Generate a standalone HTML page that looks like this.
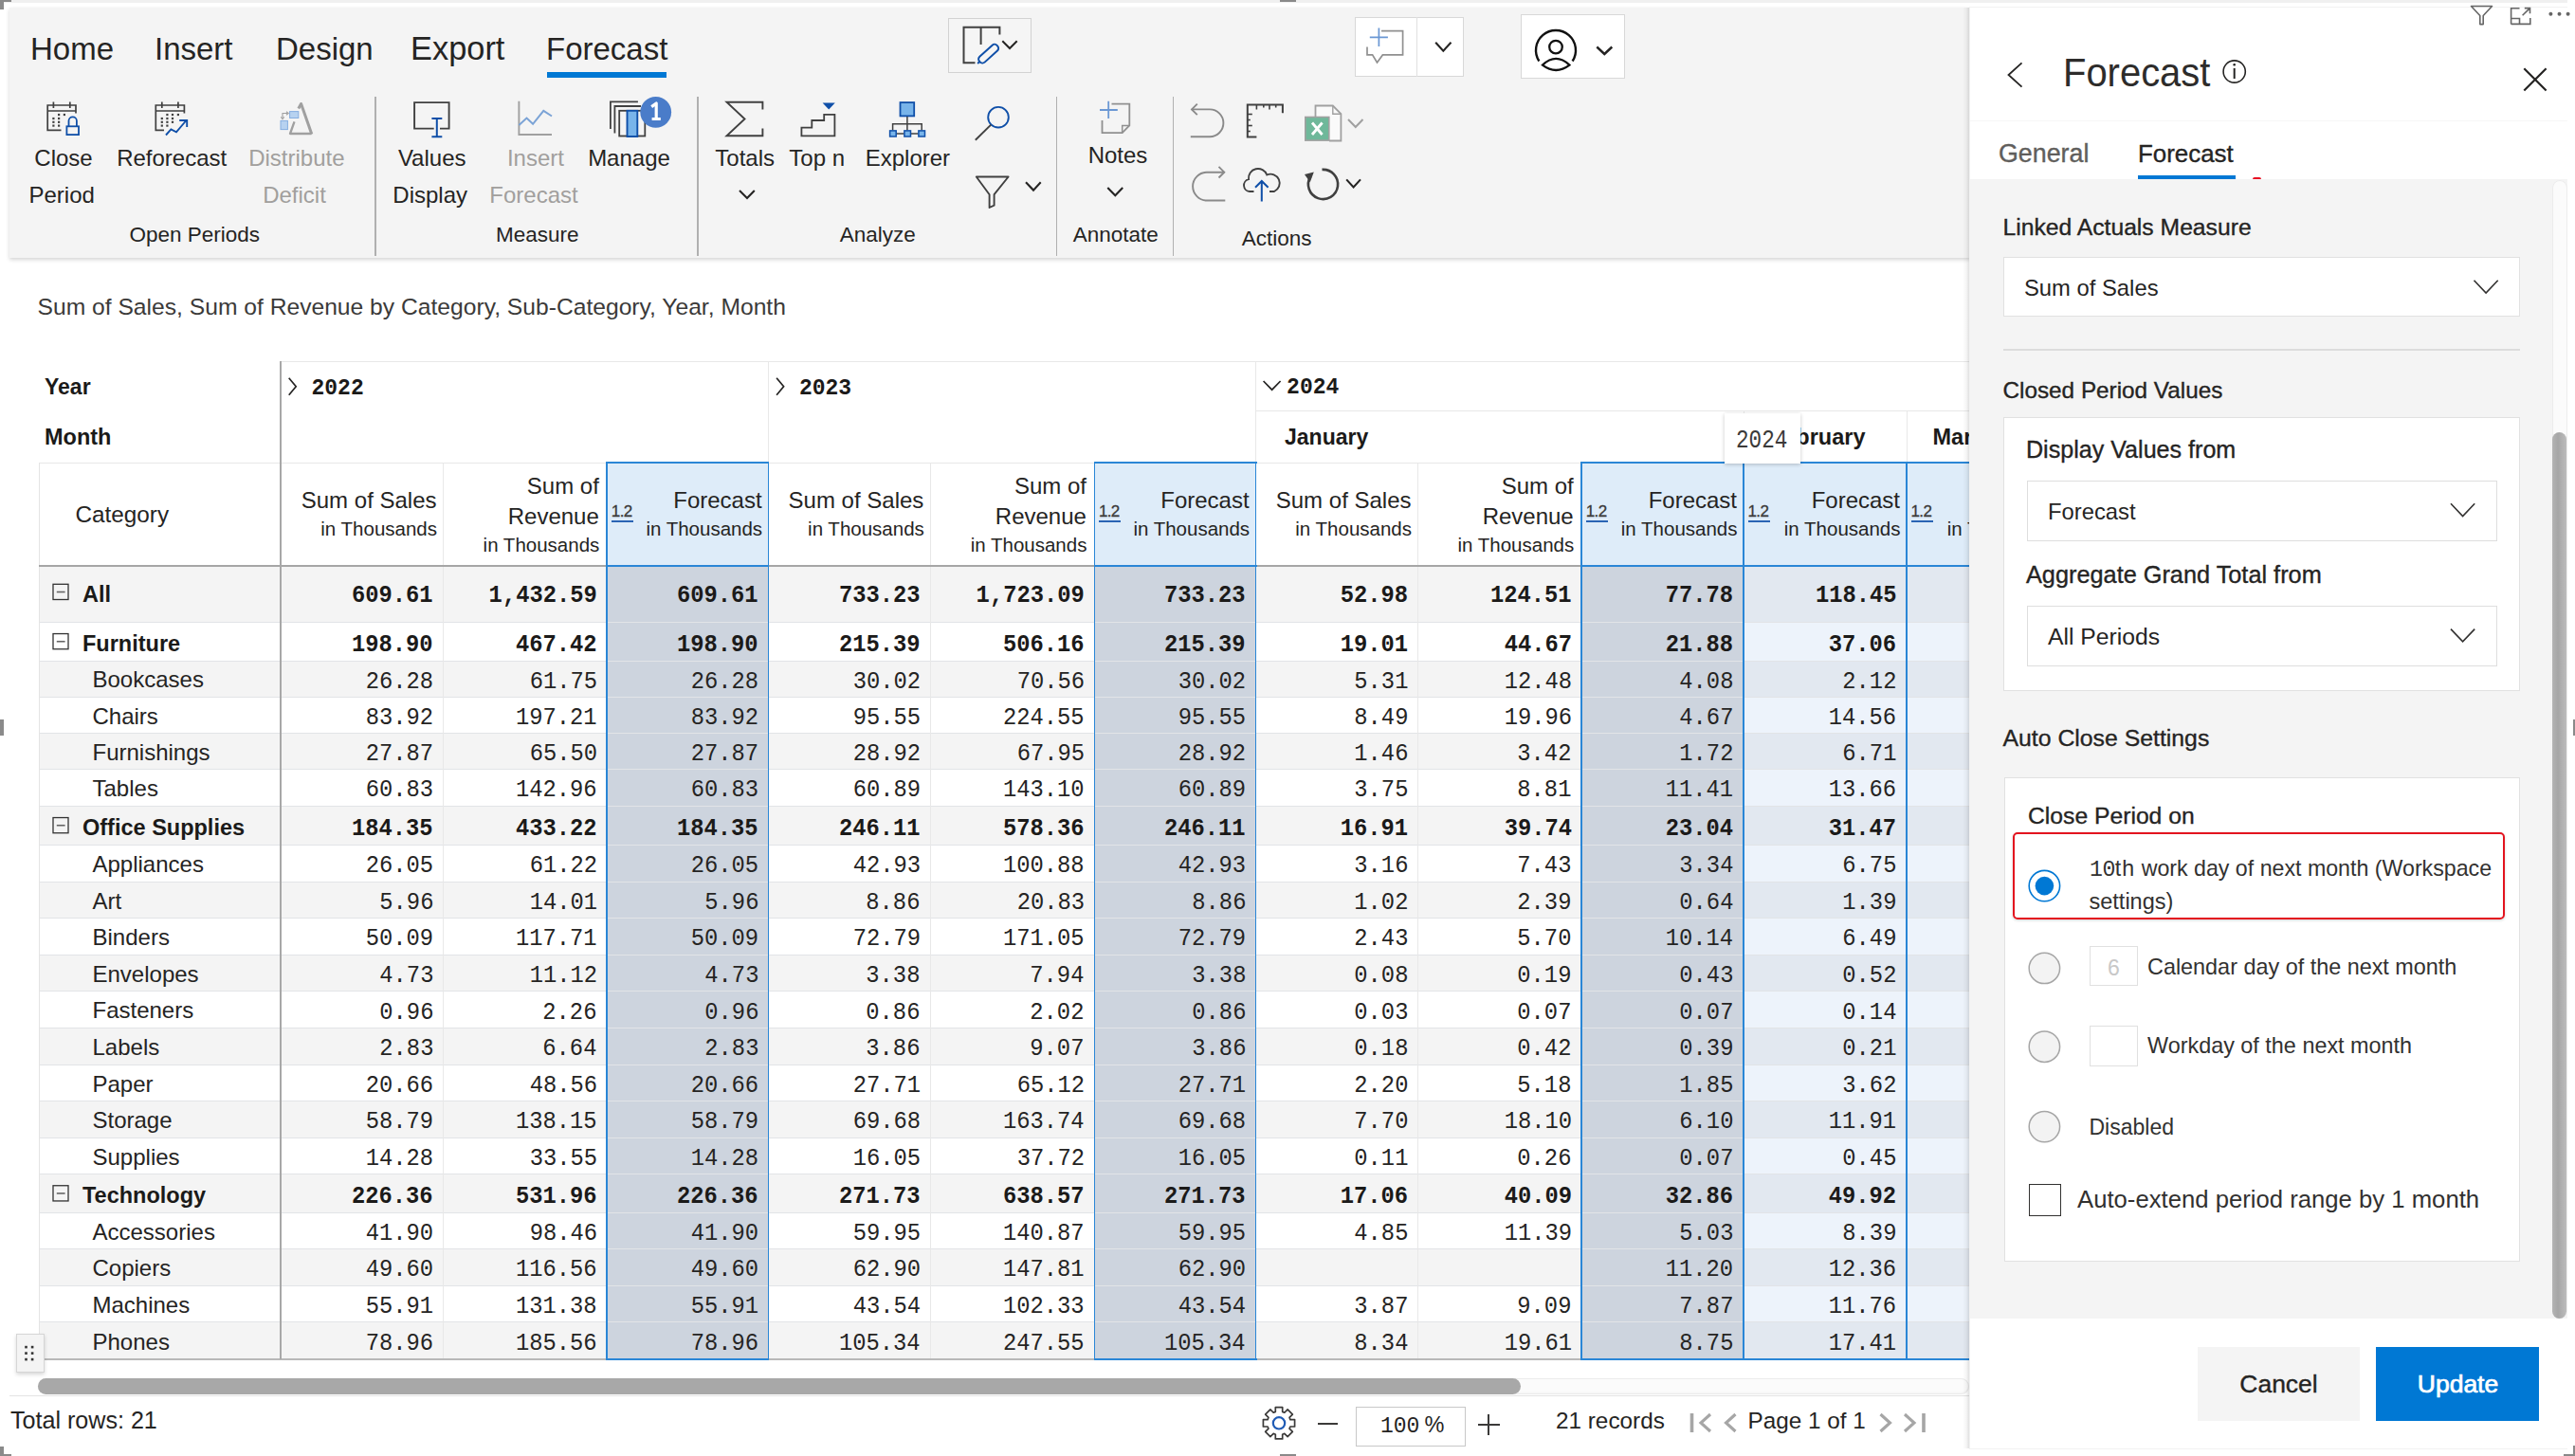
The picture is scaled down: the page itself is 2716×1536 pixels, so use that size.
<!DOCTYPE html>
<html><head><meta charset="utf-8"><title>Forecast</title>
<style>
html,body{margin:0;padding:0;}
body{width:2716px;height:1536px;position:relative;overflow:hidden;background:#fff;font-family:"Liberation Sans", sans-serif;color:#252423;}
.t{position:absolute;white-space:nowrap;}
.r{position:absolute;}
svg.r{overflow:visible;}
</style></head><body>
<div class="r" style="left:0.00px;top:0.00px;width:2716.00px;height:3.00px;background:#f0f0f0;"></div>
<div class="r" style="left:10.00px;top:7.50px;width:2068.00px;height:264.50px;background:#f4f4f4;box-shadow:0 2px 4px rgba(0,0,0,0.17);"></div>
<div class="r" style="left:0.00px;top:0.00px;width:12.00px;height:1.50px;background:#8a8a8a;"></div>
<div class="r" style="left:0.00px;top:0.00px;width:3.50px;height:10.00px;background:#8a8a8a;"></div>
<div class="t" style="top:35.06px;font-size:33px;line-height:33px;font-weight:400;color:#252423;left:32.00px;">Home</div>
<div class="t" style="top:35.06px;font-size:33px;line-height:33px;font-weight:400;color:#252423;left:163.00px;">Insert</div>
<div class="t" style="top:35.06px;font-size:33px;line-height:33px;font-weight:400;color:#252423;left:291.00px;">Design</div>
<div class="t" style="top:33.87px;font-size:34.4px;line-height:34.4px;font-weight:400;color:#252423;left:433.00px;">Export</div>
<div class="t" style="top:35.06px;font-size:33px;line-height:33px;font-weight:400;color:#252423;left:576.00px;">Forecast</div>
<div class="r" style="left:577.00px;top:76.00px;width:126.00px;height:6.00px;background:#0078d4;"></div>
<div class="t" style="top:155.08px;font-size:24px;line-height:24px;font-weight:400;color:#252423;left:-533.00px;width:1200px;text-align:center;">Close</div>
<div class="t" style="top:194.08px;font-size:24px;line-height:24px;font-weight:400;color:#252423;left:-534.80px;width:1200px;text-align:center;">Period</div>
<div class="t" style="top:155.08px;font-size:24px;line-height:24px;font-weight:400;color:#252423;left:-418.80px;width:1200px;text-align:center;">Reforecast</div>
<div class="t" style="top:155.08px;font-size:24px;line-height:24px;font-weight:400;color:#a19f9d;left:-287.20px;width:1200px;text-align:center;">Distribute</div>
<div class="t" style="top:194.08px;font-size:24px;line-height:24px;font-weight:400;color:#a19f9d;left:-289.50px;width:1200px;text-align:center;">Deficit</div>
<div class="t" style="top:236.75px;font-size:22.5px;line-height:22.5px;font-weight:400;color:#252423;left:-394.80px;width:1200px;text-align:center;">Open Periods</div>
<div class="t" style="top:155.08px;font-size:24px;line-height:24px;font-weight:400;color:#252423;left:-144.30px;width:1200px;text-align:center;">Values</div>
<div class="t" style="top:194.08px;font-size:24px;line-height:24px;font-weight:400;color:#252423;left:-146.30px;width:1200px;text-align:center;">Display</div>
<div class="t" style="top:155.08px;font-size:24px;line-height:24px;font-weight:400;color:#a19f9d;left:-35.10px;width:1200px;text-align:center;">Insert</div>
<div class="t" style="top:194.08px;font-size:24px;line-height:24px;font-weight:400;color:#a19f9d;left:-37.00px;width:1200px;text-align:center;">Forecast</div>
<div class="t" style="top:155.08px;font-size:24px;line-height:24px;font-weight:400;color:#252423;left:63.50px;width:1200px;text-align:center;">Manage</div>
<div class="t" style="top:236.75px;font-size:22.5px;line-height:22.5px;font-weight:400;color:#252423;left:-33.20px;width:1200px;text-align:center;">Measure</div>
<div class="t" style="top:155.08px;font-size:24px;line-height:24px;font-weight:400;color:#252423;left:185.70px;width:1200px;text-align:center;">Totals</div>
<div class="t" style="top:155.08px;font-size:24px;line-height:24px;font-weight:400;color:#252423;left:261.70px;width:1200px;text-align:center;">Top n</div>
<div class="t" style="top:155.08px;font-size:24px;line-height:24px;font-weight:400;color:#252423;left:357.40px;width:1200px;text-align:center;">Explorer</div>
<div class="t" style="top:236.75px;font-size:22.5px;line-height:22.5px;font-weight:400;color:#252423;left:325.70px;width:1200px;text-align:center;">Analyze</div>
<div class="t" style="top:152.38px;font-size:24px;line-height:24px;font-weight:400;color:#252423;left:579.00px;width:1200px;text-align:center;">Notes</div>
<div class="t" style="top:236.75px;font-size:22.5px;line-height:22.5px;font-weight:400;color:#252423;left:576.70px;width:1200px;text-align:center;">Annotate</div>
<div class="t" style="top:240.55px;font-size:22.5px;line-height:22.5px;font-weight:400;color:#252423;left:746.60px;width:1200px;text-align:center;">Actions</div>
<div class="r" style="left:395.25px;top:102.00px;width:1.50px;height:168.00px;background:#b0b0b0;"></div>
<div class="r" style="left:735.25px;top:102.00px;width:1.50px;height:168.00px;background:#b0b0b0;"></div>
<div class="r" style="left:1113.75px;top:102.00px;width:1.50px;height:168.00px;background:#b0b0b0;"></div>
<div class="r" style="left:1236.75px;top:102.00px;width:1.50px;height:168.00px;background:#b0b0b0;"></div>
<svg class="r" style="left:40px;top:100px" width="60" height="50" viewBox="40 100 60 50"><path d="M64.5 137.4 H50.2 V111 H80 V119.4 M50.2 117 H80" fill="none" stroke-linecap="butt" stroke-linejoin="miter" stroke="#404040" stroke-width="1.7"/><path d="M56.4 107.5 V114 M73.8 107.5 V114" stroke="#404040" stroke-width="1.7"/><rect x="61.0" y="119.9" width="2.2" height="2.2" fill="#404040"/><rect x="66.80000000000001" y="119.9" width="2.2" height="2.2" fill="#404040"/><rect x="55.3" y="123.9" width="2.2" height="2.2" fill="#404040"/><rect x="61.0" y="123.9" width="2.2" height="2.2" fill="#404040"/><rect x="55.3" y="127.70000000000002" width="2.2" height="2.2" fill="#404040"/><rect x="61.0" y="127.70000000000002" width="2.2" height="2.2" fill="#404040"/><rect x="55.3" y="131.5" width="2.2" height="2.2" fill="#404040"/><rect x="61.0" y="131.5" width="2.2" height="2.2" fill="#404040"/><rect x="70.4" y="133.3" width="12.6" height="8.8" fill="none" stroke="#0f4fa8" stroke-width="1.8"/><path d="M72.5 133 V127.5 A4.2 4.2 0 0 1 80.9 127.5 V133" fill="none" stroke="#0f4fa8" stroke-width="1.8"/></svg>
<svg class="r" style="left:155px;top:100px" width="50" height="50" viewBox="155 100 50 50"><path d="M173 137.4 H164.3 V111 H194.4 V119.4 M164.3 117 H194.4" fill="none" stroke-linecap="butt" stroke-linejoin="miter" stroke="#404040" stroke-width="1.7"/><path d="M170.8 107.5 V114 M187.9 107.5 V114" stroke="#404040" stroke-width="1.7"/><rect x="175.3" y="119.9" width="2.2" height="2.2" fill="#404040"/><rect x="180.9" y="119.9" width="2.2" height="2.2" fill="#404040"/><rect x="186.8" y="119.9" width="2.2" height="2.2" fill="#404040"/><rect x="169.70000000000002" y="123.9" width="2.2" height="2.2" fill="#404040"/><rect x="175.3" y="123.9" width="2.2" height="2.2" fill="#404040"/><rect x="180.9" y="123.9" width="2.2" height="2.2" fill="#404040"/><rect x="169.70000000000002" y="127.70000000000002" width="2.2" height="2.2" fill="#404040"/><rect x="175.3" y="127.70000000000002" width="2.2" height="2.2" fill="#404040"/><rect x="180.9" y="127.70000000000002" width="2.2" height="2.2" fill="#404040"/><rect x="169.70000000000002" y="131.5" width="2.2" height="2.2" fill="#404040"/><rect x="175.3" y="131.5" width="2.2" height="2.2" fill="#404040"/><path d="M175 142.5 L180.4 136.4 L186 139.4 L196.9 126.5 M189.2 127 H197.2 V134" fill="none" stroke="#0f4fa8" stroke-width="1.9"/></svg>
<svg class="r" style="left:290px;top:100px" width="50" height="50" viewBox="290 100 50 50"><path d="M310.5 128.4 L306 141 H328.5" fill="none" stroke="#a0a0a0" stroke-width="2.3" stroke-linejoin="round"/><path d="M328.8 141.6 L317.6 109.5 L314.8 114.5" fill="none" stroke="#a0a0a0" stroke-width="3" stroke-linejoin="round"/><rect x="305.6" y="117.6" width="9.2" height="6.9" fill="#b7d2f0" stroke="#86aee0" stroke-width="1"/><rect x="296" y="127.4" width="7.4" height="9.2" fill="#b7d2f0" stroke="#86aee0" stroke-width="1"/><path d="M298 124.5 V119.5 H303" fill="none" stroke="#a0a0a0" stroke-width="1.1"/><path d="M296.3 123.3 L298 125.6 L299.7 123.3 M302 117.8 L304.2 119.5 L302 121.2" fill="none" stroke="#a0a0a0" stroke-width="1.1"/></svg>
<svg class="r" style="left:430px;top:100px" width="50" height="50" viewBox="430 100 50 50"><path d="M457.7 135.6 H437.1 V108.1 H473.6 V135.6 H464" fill="none" stroke="#404040" stroke-width="1.9"/><path d="M460.8 125 V144.3 M455.4 125 H466.3 M455.4 144.3 H466.3" fill="none" stroke="#0f4fa8" stroke-width="2"/></svg>
<svg class="r" style="left:540px;top:100px" width="50" height="50" viewBox="540 100 50 50"><path d="M547.4 106.7 V142 H582" fill="none" stroke="#a0a0a0" stroke-width="1.9"/><path d="M547.4 131.9 L555.5 124.6 L562.1 130.8 L573.3 116.9 L582 122.5" fill="none" stroke="#7ba3d6" stroke-width="2"/></svg>
<svg class="r" style="left:638px;top:98px" width="74" height="52" viewBox="638 98 74 52"><path d="M643.9 136.1 V107.4 H672.9 M648.4 140.6 V112 H676" fill="none" stroke="#404040" stroke-width="1.8"/><rect x="653.2" y="116.8" width="27.1" height="26.7" fill="none" stroke="#404040" stroke-width="1.8"/><rect x="661.5" y="116.8" width="10.8" height="27.2" fill="#78b4ea" stroke="#0f4fa8" stroke-width="1.9"/><circle cx="691.7" cy="118.3" r="16.4" fill="#4a7cc9"/><path d="M687.2 112.6 L692.2 109 V125.5 M687.6 125.5 H696.8" fill="none" stroke="#fff" stroke-width="3.2" stroke-linejoin="round"/></svg>
<svg class="r" style="left:760px;top:100px" width="50" height="50" viewBox="760 100 50 50"><path d="M804.4 115.4 V107.7 H766.5 L785.5 125.5 L766.5 143.3 H804.4 V135.6" fill="none" stroke="#404040" stroke-width="1.9"/></svg>
<svg class="r" style="left:775px;top:195px" width="25" height="20" viewBox="775 195 25 20"><path d="M780 201 L788 209 L795.8 201" fill="none" stroke="#252423" stroke-width="2.1"/></svg>
<svg class="r" style="left:840px;top:100px" width="50" height="50" viewBox="840 100 50 50"><path d="M845.4 143.3 H880.4 V120.8 H869.2 V127 H856.3 V134.6 H845.4 Z" fill="none" stroke="#404040" stroke-width="1.8"/><path d="M867.6 108.5 H880.8 L874.2 115.6 Z" fill="#0f4fa8"/></svg>
<svg class="r" style="left:930px;top:100px" width="55" height="50" viewBox="930 100 55 50"><rect x="949.5" y="108.1" width="14.7" height="14.3" fill="#78b4ea" stroke="#0f4fa8" stroke-width="1.8"/><path d="M956.9 123 V130.8 M941.6 137.5 V130.8 H972.2 V137.5 M956.9 130.8 V137.5 M945.4 141 H953.5 M960.8 141 H968.5" fill="none" stroke="#404040" stroke-width="1.5"/><rect x="938.6" y="137.9" width="6.6" height="6.1" fill="#78b4ea" stroke="#0f4fa8" stroke-width="1.5"/><rect x="953.9" y="137.9" width="6.6" height="6.1" fill="#78b4ea" stroke="#0f4fa8" stroke-width="1.5"/><rect x="968.9" y="137.9" width="6.6" height="6.1" fill="#78b4ea" stroke="#0f4fa8" stroke-width="1.5"/></svg>
<svg class="r" style="left:1020px;top:105px" width="50" height="50" viewBox="1020 105 50 50"><circle cx="1053" cy="123.7" r="10.8" fill="none" stroke="#0f4fa8" stroke-width="1.9"/><path d="M1028.8 147.7 L1045.2 131.6" stroke="#404040" stroke-width="1.9"/></svg>
<svg class="r" style="left:1020px;top:180px" width="85" height="45" viewBox="1020 180 85 45"><path d="M1029.8 186.5 H1063.6 L1048.6 205.2 V216.7 L1043.6 219 V205.2 Z" fill="none" stroke="#404040" stroke-width="1.9" stroke-linejoin="round"/><path d="M1082 192.3 L1090 200.6 L1097.7 192.3" fill="none" stroke="#252423" stroke-width="2.1"/></svg>
<svg class="r" style="left:1155px;top:100px" width="45" height="50" viewBox="1155 100 45 50"><path d="M1160 116 H1178.8 M1169.2 106.7 V125" stroke="#6b98d4" stroke-width="1.8"/><path d="M1172.5 109.6 H1191.3 V132.5 L1183.7 140.2 H1162.5 V127" fill="none" stroke="#909090" stroke-width="1.8"/><path d="M1191.3 132.5 H1183.7 V140.2" fill="none" stroke="#909090" stroke-width="1.5"/></svg>
<svg class="r" style="left:1160px;top:190px" width="35" height="25" viewBox="1160 190 35 25"><path d="M1168.3 198 L1176.3 206.2 L1184.2 198" fill="none" stroke="#252423" stroke-width="2.1"/></svg>
<svg class="r" style="left:1250px;top:105px" width="50" height="45" viewBox="1250 105 50 45"><path d="M1256.7 115.4 H1276 A14.4 14.4 0 0 1 1276 144.2 H1255.8" fill="none" stroke="#8a8a8a" stroke-width="1.9"/><path d="M1262.8 109.6 L1257 115.4 L1262.8 121.2" fill="none" stroke="#8a8a8a" stroke-width="1.9"/></svg>
<svg class="r" style="left:1250px;top:172px" width="50" height="44" viewBox="1250 172 50 44"><path d="M1291.3 181.7 H1273 A14.9 14.9 0 0 0 1273 211.5 H1292.3" fill="none" stroke="#8a8a8a" stroke-width="1.9"/><path d="M1285.5 175.9 L1291.3 181.7 L1285.5 187.5" fill="none" stroke="#8a8a8a" stroke-width="1.9"/></svg>
<svg class="r" style="left:1310px;top:104px" width="50" height="46" viewBox="1310 104 50 46"><path d="M1352.9 119.2 V110.5 H1315.8 V144.6 H1325.4" fill="none" stroke="#404040" stroke-width="2"/><path d="M1325.4 110.5 V115.5" stroke="#404040" stroke-width="1.6"/><path d="M1332.8 110.5 V113.5" stroke="#404040" stroke-width="1.6"/><path d="M1339 110.5 V115.5" stroke="#404040" stroke-width="1.6"/><path d="M1345.7 110.5 V113.5" stroke="#404040" stroke-width="1.6"/><path d="M1315.8 120.5 H1320.8" stroke="#404040" stroke-width="1.6"/><path d="M1315.8 126.5 H1318.8" stroke="#404040" stroke-width="1.6"/><path d="M1315.8 132.5 H1320.8" stroke="#404040" stroke-width="1.6"/><path d="M1315.8 138.5 H1318.8" stroke="#404040" stroke-width="1.6"/></svg>
<svg class="r" style="left:1370px;top:104px" width="75" height="48" viewBox="1370 104 75 48"><path d="M1387.5 123 V111.5 H1405.8 L1414.4 120.2 V148.5 H1402" fill="#fafafa" stroke="#a0a0a0" stroke-width="1.8"/><path d="M1405.8 111.5 V120.2 H1414.4" fill="none" stroke="#a0a0a0" stroke-width="1.4"/><rect x="1376.8" y="123.5" width="25" height="24.6" fill="#6fb89a" stroke="#a0a0a0" stroke-width="1.6"/><path d="M1384 129.5 L1394.6 142 M1394.6 129.5 L1384 142" stroke="#fff" stroke-width="2.8"/><path d="M1422 126 L1429.8 134 L1437.5 126" fill="none" stroke="#a0a0a0" stroke-width="2"/></svg>
<svg class="r" style="left:1305px;top:172px" width="55" height="46" viewBox="1305 172 55 46"><path d="M1322.5 202 H1318 A6.5 6.5 0 0 1 1317 189.2 A10 10 0 0 1 1336.3 184.5 A8.5 8.5 0 0 1 1344 202 H1339" fill="none" stroke="#404040" stroke-width="1.9"/><path d="M1330.8 212.5 V191.8 M1324 197.8 L1330.8 191 L1337.6 197.8" fill="none" stroke="#0f4fa8" stroke-width="2"/></svg>
<svg class="r" style="left:1370px;top:172px" width="75" height="44" viewBox="1370 172 75 44"><path d="M1382.3 186.2 A15.6 15.6 0 1 0 1394.5 178.9" fill="none" stroke="#404040" stroke-width="2.6"/><path d="M1376 184 L1385.8 181.6 L1381.8 192.2 Z" fill="#404040"/><path d="M1420.2 189.4 L1427.6 197.4 L1435 189.4" fill="none" stroke="#252423" stroke-width="2.1"/></svg>
<div class="r" style="left:1000.00px;top:19.20px;width:88.00px;height:57.80px;background:#f5f5f5;border:1px solid #d2d2d2;box-sizing:border-box;"></div>
<svg class="r" style="left:1005px;top:22px" width="80" height="53" viewBox="1005 22 80 53"><path d="M1028.5 66.3 H1016.5 V28.8 H1054.4 V36.5 M1034.6 28.8 V47" fill="none" stroke="#404040" stroke-width="2"/><g transform="rotate(-42 1043 56.3)"><rect x="1030" y="52.3" width="25" height="8" rx="3.5" fill="none" stroke="#0f4fa8" stroke-width="2"/><path d="M1030 56.3 l-3 0" stroke="#0f4fa8" stroke-width="2"/></g><path d="M1057.3 43.3 L1065 51 L1072.7 43.3" fill="none" stroke="#252423" stroke-width="2"/></svg>
<div class="r" style="left:1428.50px;top:18.00px;width:115.50px;height:62.50px;background:#ffffff;border:1px solid #d8d8d8;box-sizing:border-box;"></div>
<div class="r" style="left:1494.10px;top:18.00px;width:1.00px;height:62.50px;background:#e0e0e0;"></div>
<svg class="r" style="left:1435px;top:24px" width="105" height="48" viewBox="1435 24 105 48"><path d="M1444.8 39.4 H1463.9 M1454.4 29.4 V49" stroke="#6b98d4" stroke-width="1.7"/><path d="M1457 32.6 H1479.6 V57.9 H1458.4 L1452.5 66 L1447.6 57.9 H1442 V49.5" fill="none" stroke="#909090" stroke-width="1.7"/><path d="M1514.2 44.8 L1522.3 53.6 L1530.5 44.8" fill="none" stroke="#252423" stroke-width="2.1"/></svg>
<div class="r" style="left:1604.00px;top:15.00px;width:109.50px;height:67.50px;background:#ffffff;border:1.2px solid #d8d8d8;box-sizing:border-box;"></div>
<svg class="r" style="left:1612px;top:24px" width="96" height="54" viewBox="1612 24 96 54"><path d="M1623.4 64.5 A21 21 0 1 1 1658.6 64.5" fill="none" stroke="#111" stroke-width="2.4"/><circle cx="1641" cy="49.6" r="6.8" fill="none" stroke="#111" stroke-width="2.3"/><path d="M1627 68.6 Q1641.2 55.2 1655.4 68.6 Q1641.2 79.4 1627 68.6 Z" fill="none" stroke="#111" stroke-width="2.3"/><path d="M1684.3 49.5 L1692.3 57 L1700.3 49.5" fill="none" stroke="#252423" stroke-width="2.4"/></svg>
<div class="t" style="top:312.13px;font-size:24.65px;line-height:24.65px;font-weight:400;color:#3b3a39;left:39.50px;">Sum of Sales, Sum of Revenue by Category, Sub-Category, Year, Month</div>
<div class="r" style="left:41.00px;top:596.50px;width:2037.00px;height:60.00px;background:#f4f4f4;"></div>
<div class="r" style="left:640.30px;top:596.50px;width:170.30px;height:60.00px;background:#cdd4de;"></div>
<div class="r" style="left:1154.40px;top:596.50px;width:170.20px;height:60.00px;background:#cdd4de;"></div>
<div class="r" style="left:1668.20px;top:596.50px;width:170.80px;height:60.00px;background:#cdd4de;"></div>
<div class="r" style="left:1839.00px;top:596.50px;width:172.00px;height:60.00px;background:#e2e8f0;"></div>
<div class="r" style="left:2011.00px;top:596.50px;width:67.00px;height:60.00px;background:#e2e8f0;"></div>
<div class="r" style="left:640.30px;top:656.50px;width:170.30px;height:40.50px;background:#cdd4de;"></div>
<div class="r" style="left:1154.40px;top:656.50px;width:170.20px;height:40.50px;background:#cdd4de;"></div>
<div class="r" style="left:1668.20px;top:656.50px;width:170.80px;height:40.50px;background:#cdd4de;"></div>
<div class="r" style="left:1839.00px;top:656.50px;width:172.00px;height:40.50px;background:#edf3fb;"></div>
<div class="r" style="left:2011.00px;top:656.50px;width:67.00px;height:40.50px;background:#edf3fb;"></div>
<div class="r" style="left:41.00px;top:697.00px;width:2037.00px;height:38.25px;background:#f4f4f4;"></div>
<div class="r" style="left:640.30px;top:697.00px;width:170.30px;height:38.25px;background:#cdd4de;"></div>
<div class="r" style="left:1154.40px;top:697.00px;width:170.20px;height:38.25px;background:#cdd4de;"></div>
<div class="r" style="left:1668.20px;top:697.00px;width:170.80px;height:38.25px;background:#cdd4de;"></div>
<div class="r" style="left:1839.00px;top:697.00px;width:172.00px;height:38.25px;background:#e2e8f0;"></div>
<div class="r" style="left:2011.00px;top:697.00px;width:67.00px;height:38.25px;background:#e2e8f0;"></div>
<div class="r" style="left:640.30px;top:735.25px;width:170.30px;height:38.25px;background:#cdd4de;"></div>
<div class="r" style="left:1154.40px;top:735.25px;width:170.20px;height:38.25px;background:#cdd4de;"></div>
<div class="r" style="left:1668.20px;top:735.25px;width:170.80px;height:38.25px;background:#cdd4de;"></div>
<div class="r" style="left:1839.00px;top:735.25px;width:172.00px;height:38.25px;background:#edf3fb;"></div>
<div class="r" style="left:2011.00px;top:735.25px;width:67.00px;height:38.25px;background:#edf3fb;"></div>
<div class="r" style="left:41.00px;top:773.50px;width:2037.00px;height:38.25px;background:#f4f4f4;"></div>
<div class="r" style="left:640.30px;top:773.50px;width:170.30px;height:38.25px;background:#cdd4de;"></div>
<div class="r" style="left:1154.40px;top:773.50px;width:170.20px;height:38.25px;background:#cdd4de;"></div>
<div class="r" style="left:1668.20px;top:773.50px;width:170.80px;height:38.25px;background:#cdd4de;"></div>
<div class="r" style="left:1839.00px;top:773.50px;width:172.00px;height:38.25px;background:#e2e8f0;"></div>
<div class="r" style="left:2011.00px;top:773.50px;width:67.00px;height:38.25px;background:#e2e8f0;"></div>
<div class="r" style="left:640.30px;top:811.75px;width:170.30px;height:38.25px;background:#cdd4de;"></div>
<div class="r" style="left:1154.40px;top:811.75px;width:170.20px;height:38.25px;background:#cdd4de;"></div>
<div class="r" style="left:1668.20px;top:811.75px;width:170.80px;height:38.25px;background:#cdd4de;"></div>
<div class="r" style="left:1839.00px;top:811.75px;width:172.00px;height:38.25px;background:#edf3fb;"></div>
<div class="r" style="left:2011.00px;top:811.75px;width:67.00px;height:38.25px;background:#edf3fb;"></div>
<div class="r" style="left:41.00px;top:850.00px;width:2037.00px;height:41.50px;background:#f4f4f4;"></div>
<div class="r" style="left:640.30px;top:850.00px;width:170.30px;height:41.50px;background:#cdd4de;"></div>
<div class="r" style="left:1154.40px;top:850.00px;width:170.20px;height:41.50px;background:#cdd4de;"></div>
<div class="r" style="left:1668.20px;top:850.00px;width:170.80px;height:41.50px;background:#cdd4de;"></div>
<div class="r" style="left:1839.00px;top:850.00px;width:172.00px;height:41.50px;background:#e2e8f0;"></div>
<div class="r" style="left:2011.00px;top:850.00px;width:67.00px;height:41.50px;background:#e2e8f0;"></div>
<div class="r" style="left:640.30px;top:891.50px;width:170.30px;height:38.60px;background:#cdd4de;"></div>
<div class="r" style="left:1154.40px;top:891.50px;width:170.20px;height:38.60px;background:#cdd4de;"></div>
<div class="r" style="left:1668.20px;top:891.50px;width:170.80px;height:38.60px;background:#cdd4de;"></div>
<div class="r" style="left:1839.00px;top:891.50px;width:172.00px;height:38.60px;background:#edf3fb;"></div>
<div class="r" style="left:2011.00px;top:891.50px;width:67.00px;height:38.60px;background:#edf3fb;"></div>
<div class="r" style="left:41.00px;top:930.10px;width:2037.00px;height:38.60px;background:#f4f4f4;"></div>
<div class="r" style="left:640.30px;top:930.10px;width:170.30px;height:38.60px;background:#cdd4de;"></div>
<div class="r" style="left:1154.40px;top:930.10px;width:170.20px;height:38.60px;background:#cdd4de;"></div>
<div class="r" style="left:1668.20px;top:930.10px;width:170.80px;height:38.60px;background:#cdd4de;"></div>
<div class="r" style="left:1839.00px;top:930.10px;width:172.00px;height:38.60px;background:#e2e8f0;"></div>
<div class="r" style="left:2011.00px;top:930.10px;width:67.00px;height:38.60px;background:#e2e8f0;"></div>
<div class="r" style="left:640.30px;top:968.70px;width:170.30px;height:38.60px;background:#cdd4de;"></div>
<div class="r" style="left:1154.40px;top:968.70px;width:170.20px;height:38.60px;background:#cdd4de;"></div>
<div class="r" style="left:1668.20px;top:968.70px;width:170.80px;height:38.60px;background:#cdd4de;"></div>
<div class="r" style="left:1839.00px;top:968.70px;width:172.00px;height:38.60px;background:#edf3fb;"></div>
<div class="r" style="left:2011.00px;top:968.70px;width:67.00px;height:38.60px;background:#edf3fb;"></div>
<div class="r" style="left:41.00px;top:1007.30px;width:2037.00px;height:38.60px;background:#f4f4f4;"></div>
<div class="r" style="left:640.30px;top:1007.30px;width:170.30px;height:38.60px;background:#cdd4de;"></div>
<div class="r" style="left:1154.40px;top:1007.30px;width:170.20px;height:38.60px;background:#cdd4de;"></div>
<div class="r" style="left:1668.20px;top:1007.30px;width:170.80px;height:38.60px;background:#cdd4de;"></div>
<div class="r" style="left:1839.00px;top:1007.30px;width:172.00px;height:38.60px;background:#e2e8f0;"></div>
<div class="r" style="left:2011.00px;top:1007.30px;width:67.00px;height:38.60px;background:#e2e8f0;"></div>
<div class="r" style="left:640.30px;top:1045.90px;width:170.30px;height:38.60px;background:#cdd4de;"></div>
<div class="r" style="left:1154.40px;top:1045.90px;width:170.20px;height:38.60px;background:#cdd4de;"></div>
<div class="r" style="left:1668.20px;top:1045.90px;width:170.80px;height:38.60px;background:#cdd4de;"></div>
<div class="r" style="left:1839.00px;top:1045.90px;width:172.00px;height:38.60px;background:#edf3fb;"></div>
<div class="r" style="left:2011.00px;top:1045.90px;width:67.00px;height:38.60px;background:#edf3fb;"></div>
<div class="r" style="left:41.00px;top:1084.50px;width:2037.00px;height:38.60px;background:#f4f4f4;"></div>
<div class="r" style="left:640.30px;top:1084.50px;width:170.30px;height:38.60px;background:#cdd4de;"></div>
<div class="r" style="left:1154.40px;top:1084.50px;width:170.20px;height:38.60px;background:#cdd4de;"></div>
<div class="r" style="left:1668.20px;top:1084.50px;width:170.80px;height:38.60px;background:#cdd4de;"></div>
<div class="r" style="left:1839.00px;top:1084.50px;width:172.00px;height:38.60px;background:#e2e8f0;"></div>
<div class="r" style="left:2011.00px;top:1084.50px;width:67.00px;height:38.60px;background:#e2e8f0;"></div>
<div class="r" style="left:640.30px;top:1123.10px;width:170.30px;height:38.60px;background:#cdd4de;"></div>
<div class="r" style="left:1154.40px;top:1123.10px;width:170.20px;height:38.60px;background:#cdd4de;"></div>
<div class="r" style="left:1668.20px;top:1123.10px;width:170.80px;height:38.60px;background:#cdd4de;"></div>
<div class="r" style="left:1839.00px;top:1123.10px;width:172.00px;height:38.60px;background:#edf3fb;"></div>
<div class="r" style="left:2011.00px;top:1123.10px;width:67.00px;height:38.60px;background:#edf3fb;"></div>
<div class="r" style="left:41.00px;top:1161.70px;width:2037.00px;height:38.60px;background:#f4f4f4;"></div>
<div class="r" style="left:640.30px;top:1161.70px;width:170.30px;height:38.60px;background:#cdd4de;"></div>
<div class="r" style="left:1154.40px;top:1161.70px;width:170.20px;height:38.60px;background:#cdd4de;"></div>
<div class="r" style="left:1668.20px;top:1161.70px;width:170.80px;height:38.60px;background:#cdd4de;"></div>
<div class="r" style="left:1839.00px;top:1161.70px;width:172.00px;height:38.60px;background:#e2e8f0;"></div>
<div class="r" style="left:2011.00px;top:1161.70px;width:67.00px;height:38.60px;background:#e2e8f0;"></div>
<div class="r" style="left:640.30px;top:1200.30px;width:170.30px;height:38.60px;background:#cdd4de;"></div>
<div class="r" style="left:1154.40px;top:1200.30px;width:170.20px;height:38.60px;background:#cdd4de;"></div>
<div class="r" style="left:1668.20px;top:1200.30px;width:170.80px;height:38.60px;background:#cdd4de;"></div>
<div class="r" style="left:1839.00px;top:1200.30px;width:172.00px;height:38.60px;background:#edf3fb;"></div>
<div class="r" style="left:2011.00px;top:1200.30px;width:67.00px;height:38.60px;background:#edf3fb;"></div>
<div class="r" style="left:41.00px;top:1238.90px;width:2037.00px;height:40.10px;background:#f4f4f4;"></div>
<div class="r" style="left:640.30px;top:1238.90px;width:170.30px;height:40.10px;background:#cdd4de;"></div>
<div class="r" style="left:1154.40px;top:1238.90px;width:170.20px;height:40.10px;background:#cdd4de;"></div>
<div class="r" style="left:1668.20px;top:1238.90px;width:170.80px;height:40.10px;background:#cdd4de;"></div>
<div class="r" style="left:1839.00px;top:1238.90px;width:172.00px;height:40.10px;background:#e2e8f0;"></div>
<div class="r" style="left:2011.00px;top:1238.90px;width:67.00px;height:40.10px;background:#e2e8f0;"></div>
<div class="r" style="left:640.30px;top:1279.00px;width:170.30px;height:38.65px;background:#cdd4de;"></div>
<div class="r" style="left:1154.40px;top:1279.00px;width:170.20px;height:38.65px;background:#cdd4de;"></div>
<div class="r" style="left:1668.20px;top:1279.00px;width:170.80px;height:38.65px;background:#cdd4de;"></div>
<div class="r" style="left:1839.00px;top:1279.00px;width:172.00px;height:38.65px;background:#edf3fb;"></div>
<div class="r" style="left:2011.00px;top:1279.00px;width:67.00px;height:38.65px;background:#edf3fb;"></div>
<div class="r" style="left:41.00px;top:1317.65px;width:2037.00px;height:38.65px;background:#f4f4f4;"></div>
<div class="r" style="left:640.30px;top:1317.65px;width:170.30px;height:38.65px;background:#cdd4de;"></div>
<div class="r" style="left:1154.40px;top:1317.65px;width:170.20px;height:38.65px;background:#cdd4de;"></div>
<div class="r" style="left:1668.20px;top:1317.65px;width:170.80px;height:38.65px;background:#cdd4de;"></div>
<div class="r" style="left:1839.00px;top:1317.65px;width:172.00px;height:38.65px;background:#e2e8f0;"></div>
<div class="r" style="left:2011.00px;top:1317.65px;width:67.00px;height:38.65px;background:#e2e8f0;"></div>
<div class="r" style="left:640.30px;top:1356.30px;width:170.30px;height:38.65px;background:#cdd4de;"></div>
<div class="r" style="left:1154.40px;top:1356.30px;width:170.20px;height:38.65px;background:#cdd4de;"></div>
<div class="r" style="left:1668.20px;top:1356.30px;width:170.80px;height:38.65px;background:#cdd4de;"></div>
<div class="r" style="left:1839.00px;top:1356.30px;width:172.00px;height:38.65px;background:#edf3fb;"></div>
<div class="r" style="left:2011.00px;top:1356.30px;width:67.00px;height:38.65px;background:#edf3fb;"></div>
<div class="r" style="left:41.00px;top:1394.95px;width:2037.00px;height:38.65px;background:#f4f4f4;"></div>
<div class="r" style="left:640.30px;top:1394.95px;width:170.30px;height:38.65px;background:#cdd4de;"></div>
<div class="r" style="left:1154.40px;top:1394.95px;width:170.20px;height:38.65px;background:#cdd4de;"></div>
<div class="r" style="left:1668.20px;top:1394.95px;width:170.80px;height:38.65px;background:#cdd4de;"></div>
<div class="r" style="left:1839.00px;top:1394.95px;width:172.00px;height:38.65px;background:#e2e8f0;"></div>
<div class="r" style="left:2011.00px;top:1394.95px;width:67.00px;height:38.65px;background:#e2e8f0;"></div>
<div class="r" style="left:41.00px;top:656.00px;width:2037.00px;height:1.00px;background:#e2e4e7;"></div>
<div class="r" style="left:41.00px;top:696.50px;width:2037.00px;height:1.00px;background:#e2e4e7;"></div>
<div class="r" style="left:41.00px;top:734.75px;width:2037.00px;height:1.00px;background:#e2e4e7;"></div>
<div class="r" style="left:41.00px;top:773.00px;width:2037.00px;height:1.00px;background:#e2e4e7;"></div>
<div class="r" style="left:41.00px;top:811.25px;width:2037.00px;height:1.00px;background:#e2e4e7;"></div>
<div class="r" style="left:41.00px;top:849.50px;width:2037.00px;height:1.00px;background:#e2e4e7;"></div>
<div class="r" style="left:41.00px;top:891.00px;width:2037.00px;height:1.00px;background:#e2e4e7;"></div>
<div class="r" style="left:41.00px;top:929.60px;width:2037.00px;height:1.00px;background:#e2e4e7;"></div>
<div class="r" style="left:41.00px;top:968.20px;width:2037.00px;height:1.00px;background:#e2e4e7;"></div>
<div class="r" style="left:41.00px;top:1006.80px;width:2037.00px;height:1.00px;background:#e2e4e7;"></div>
<div class="r" style="left:41.00px;top:1045.40px;width:2037.00px;height:1.00px;background:#e2e4e7;"></div>
<div class="r" style="left:41.00px;top:1084.00px;width:2037.00px;height:1.00px;background:#e2e4e7;"></div>
<div class="r" style="left:41.00px;top:1122.60px;width:2037.00px;height:1.00px;background:#e2e4e7;"></div>
<div class="r" style="left:41.00px;top:1161.20px;width:2037.00px;height:1.00px;background:#e2e4e7;"></div>
<div class="r" style="left:41.00px;top:1199.80px;width:2037.00px;height:1.00px;background:#e2e4e7;"></div>
<div class="r" style="left:41.00px;top:1238.40px;width:2037.00px;height:1.00px;background:#e2e4e7;"></div>
<div class="r" style="left:41.00px;top:1278.50px;width:2037.00px;height:1.00px;background:#e2e4e7;"></div>
<div class="r" style="left:41.00px;top:1317.15px;width:2037.00px;height:1.00px;background:#e2e4e7;"></div>
<div class="r" style="left:41.00px;top:1355.80px;width:2037.00px;height:1.00px;background:#e2e4e7;"></div>
<div class="r" style="left:41.00px;top:1394.45px;width:2037.00px;height:1.00px;background:#e2e4e7;"></div>
<div class="r" style="left:467.00px;top:488.00px;width:1.00px;height:945.60px;background:#e8e8e8;"></div>
<div class="r" style="left:639.80px;top:488.00px;width:1.00px;height:945.60px;background:#e8e8e8;"></div>
<div class="r" style="left:810.10px;top:488.00px;width:1.00px;height:945.60px;background:#e8e8e8;"></div>
<div class="r" style="left:980.80px;top:488.00px;width:1.00px;height:945.60px;background:#e8e8e8;"></div>
<div class="r" style="left:1153.90px;top:488.00px;width:1.00px;height:945.60px;background:#e8e8e8;"></div>
<div class="r" style="left:1324.10px;top:488.00px;width:1.00px;height:945.60px;background:#e8e8e8;"></div>
<div class="r" style="left:1495.00px;top:488.00px;width:1.00px;height:945.60px;background:#e8e8e8;"></div>
<div class="r" style="left:1667.70px;top:488.00px;width:1.00px;height:945.60px;background:#e8e8e8;"></div>
<div class="r" style="left:1838.50px;top:488.00px;width:1.00px;height:945.60px;background:#e8e8e8;"></div>
<div class="r" style="left:2010.50px;top:488.00px;width:1.00px;height:945.60px;background:#e8e8e8;"></div>
<div class="r" style="left:296.20px;top:380.50px;width:1781.80px;height:1.00px;background:#e8e8e8;"></div>
<div class="r" style="left:1324.60px;top:433.10px;width:753.40px;height:1.00px;background:#e8e8e8;"></div>
<div class="r" style="left:41.00px;top:487.50px;width:2037.00px;height:1.00px;background:#e8e8e8;"></div>
<div class="r" style="left:40.50px;top:488.00px;width:1.00px;height:946.00px;background:#e4e4e4;"></div>
<div class="r" style="left:810.10px;top:381.00px;width:1.00px;height:107.00px;background:#e8e8e8;"></div>
<div class="r" style="left:1324.10px;top:381.00px;width:1.00px;height:107.00px;background:#e8e8e8;"></div>
<div class="r" style="left:1838.50px;top:433.60px;width:1.00px;height:54.40px;background:#e8e8e8;"></div>
<div class="r" style="left:2010.50px;top:433.60px;width:1.00px;height:54.40px;background:#e8e8e8;"></div>
<div class="r" style="left:640.30px;top:488.00px;width:170.30px;height:108.50px;background:#deecf9;"></div>
<div class="r" style="left:1154.40px;top:488.00px;width:170.20px;height:108.50px;background:#deecf9;"></div>
<div class="r" style="left:1668.20px;top:488.00px;width:170.80px;height:108.50px;background:#deecf9;"></div>
<div class="r" style="left:1839.00px;top:488.00px;width:172.00px;height:108.50px;background:#deecf9;"></div>
<div class="r" style="left:2011.00px;top:488.00px;width:67.00px;height:108.50px;background:#deecf9;"></div>
<div class="r" style="left:41.00px;top:595.50px;width:2037.00px;height:2.00px;background:#a6a6a6;"></div>
<div class="r" style="left:41.00px;top:1433.00px;width:2037.00px;height:1.50px;background:#b8b8b8;"></div>
<div class="r" style="left:295.20px;top:381.00px;width:2.00px;height:1053.00px;background:#a8a8a8;"></div>
<div class="r" style="left:639.40px;top:487.50px;width:1.80px;height:947.00px;background:#2a86d6;"></div>
<div class="r" style="left:809.70px;top:487.50px;width:1.80px;height:947.00px;background:#2a86d6;"></div>
<div class="r" style="left:639.40px;top:487.30px;width:172.10px;height:1.80px;background:#2a86d6;"></div>
<div class="r" style="left:639.40px;top:595.70px;width:172.10px;height:1.90px;background:#2a86d6;"></div>
<div class="r" style="left:639.40px;top:1432.70px;width:172.10px;height:1.90px;background:#2a86d6;"></div>
<div class="r" style="left:1153.50px;top:487.50px;width:1.80px;height:947.00px;background:#2a86d6;"></div>
<div class="r" style="left:1323.70px;top:487.50px;width:1.80px;height:947.00px;background:#2a86d6;"></div>
<div class="r" style="left:1153.50px;top:487.30px;width:172.00px;height:1.80px;background:#2a86d6;"></div>
<div class="r" style="left:1153.50px;top:595.70px;width:172.00px;height:1.90px;background:#2a86d6;"></div>
<div class="r" style="left:1153.50px;top:1432.70px;width:172.00px;height:1.90px;background:#2a86d6;"></div>
<div class="r" style="left:1667.30px;top:487.50px;width:1.80px;height:947.00px;background:#2a86d6;"></div>
<div class="r" style="left:1838.10px;top:487.50px;width:1.80px;height:947.00px;background:#2a86d6;"></div>
<div class="r" style="left:1667.30px;top:487.30px;width:172.60px;height:1.80px;background:#2a86d6;"></div>
<div class="r" style="left:1667.30px;top:595.70px;width:172.60px;height:1.90px;background:#2a86d6;"></div>
<div class="r" style="left:1667.30px;top:1432.70px;width:172.60px;height:1.90px;background:#2a86d6;"></div>
<div class="r" style="left:1838.10px;top:487.50px;width:1.80px;height:947.00px;background:#2a86d6;"></div>
<div class="r" style="left:2010.10px;top:487.50px;width:1.80px;height:947.00px;background:#2a86d6;"></div>
<div class="r" style="left:1838.10px;top:487.30px;width:173.80px;height:1.80px;background:#2a86d6;"></div>
<div class="r" style="left:1838.10px;top:595.70px;width:173.80px;height:1.90px;background:#2a86d6;"></div>
<div class="r" style="left:1838.10px;top:1432.70px;width:173.80px;height:1.90px;background:#2a86d6;"></div>
<div class="r" style="left:2010.10px;top:487.50px;width:1.80px;height:947.00px;background:#2a86d6;"></div>
<div class="r" style="left:2010.10px;top:487.30px;width:67.90px;height:1.80px;background:#2a86d6;"></div>
<div class="r" style="left:2010.10px;top:595.70px;width:67.90px;height:1.90px;background:#2a86d6;"></div>
<div class="r" style="left:2010.10px;top:1432.70px;width:67.90px;height:1.90px;background:#2a86d6;"></div>
<div class="t" style="top:396.73px;font-size:23px;line-height:23px;font-weight:700;color:#1b1a19;left:47.00px;">Year</div>
<div class="t" style="top:449.80px;font-size:23.5px;line-height:23.5px;font-weight:700;color:#1b1a19;left:47.00px;">Month</div>
<div class="t" style="top:531.03px;font-size:24.3px;line-height:24.3px;font-weight:400;color:#252423;left:79.50px;">Category</div>
<svg class="r" style="left:0;top:0" width="1" height="1"><path d="M304.7 398.7 l7.5 9 l-7.5 9" fill="none" stroke="#252423" stroke-width="1.7"/></svg>
<div class="t" style="top:398.88px;font-size:23px;line-height:23px;font-weight:700;color:#1b1a19;font-family:'Liberation Mono', monospace;left:328.50px;">2022</div>
<svg class="r" style="left:0;top:0" width="1" height="1"><path d="M819.1 398.7 l7.5 9 l-7.5 9" fill="none" stroke="#252423" stroke-width="1.7"/></svg>
<div class="t" style="top:398.88px;font-size:23px;line-height:23px;font-weight:700;color:#1b1a19;font-family:'Liberation Mono', monospace;left:842.90px;">2023</div>
<svg class="r" style="left:0;top:0" width="1" height="1"><path d="M1332.6 402 l9 9.2 l9 -9.2" fill="none" stroke="#252423" stroke-width="1.7"/></svg>
<div class="t" style="top:398.38px;font-size:23px;line-height:23px;font-weight:700;color:#1b1a19;font-family:'Liberation Mono', monospace;left:1357.10px;">2024</div>
<div class="t" style="top:450.03px;font-size:23px;line-height:23px;font-weight:700;color:#1b1a19;left:1355.00px;">January</div>
<div class="t" style="top:449.60px;font-size:23.5px;line-height:23.5px;font-weight:700;color:#1b1a19;right:748.50px;text-align:right;">February</div>
<div class="t" style="top:449.60px;font-size:23.5px;line-height:23.5px;font-weight:700;color:#1b1a19;left:2038.50px;">March</div>
<div class="t" style="top:515.98px;font-size:24px;line-height:24px;font-weight:400;color:#252423;right:2255.50px;text-align:right;">Sum of Sales</div>
<div class="t" style="top:548.14px;font-size:20.5px;line-height:20.5px;font-weight:400;color:#252423;right:2255.00px;text-align:right;">in Thousands</div>
<div class="t" style="top:500.68px;font-size:24px;line-height:24px;font-weight:400;color:#252423;right:2084.20px;text-align:right;">Sum of</div>
<div class="t" style="top:532.68px;font-size:24px;line-height:24px;font-weight:400;color:#252423;right:2084.20px;text-align:right;">Revenue</div>
<div class="t" style="top:565.24px;font-size:20.5px;line-height:20.5px;font-weight:400;color:#252423;right:2083.70px;text-align:right;">in Thousands</div>
<div class="t" style="top:516.18px;font-size:24px;line-height:24px;font-weight:400;color:#252423;right:1912.40px;text-align:right;">Forecast</div>
<div class="t" style="top:548.04px;font-size:20.5px;line-height:20.5px;font-weight:400;color:#252423;right:1911.90px;text-align:right;">in Thousands</div>
<div class="t" style="top:531.11px;font-size:17px;line-height:17px;font-weight:400;color:#3b3a39;letter-spacing:-0.6px;left:644.80px;-webkit-text-stroke:0.3px #3b3a39;">1.2</div>
<div class="r" style="left:645.30px;top:549.40px;width:22.50px;height:1.50px;background:#2a64b4;"></div>
<div class="t" style="top:515.98px;font-size:24px;line-height:24px;font-weight:400;color:#252423;right:1741.70px;text-align:right;">Sum of Sales</div>
<div class="t" style="top:548.14px;font-size:20.5px;line-height:20.5px;font-weight:400;color:#252423;right:1741.20px;text-align:right;">in Thousands</div>
<div class="t" style="top:500.68px;font-size:24px;line-height:24px;font-weight:400;color:#252423;right:1570.10px;text-align:right;">Sum of</div>
<div class="t" style="top:532.68px;font-size:24px;line-height:24px;font-weight:400;color:#252423;right:1570.10px;text-align:right;">Revenue</div>
<div class="t" style="top:565.24px;font-size:20.5px;line-height:20.5px;font-weight:400;color:#252423;right:1569.60px;text-align:right;">in Thousands</div>
<div class="t" style="top:516.18px;font-size:24px;line-height:24px;font-weight:400;color:#252423;right:1398.40px;text-align:right;">Forecast</div>
<div class="t" style="top:548.04px;font-size:20.5px;line-height:20.5px;font-weight:400;color:#252423;right:1397.90px;text-align:right;">in Thousands</div>
<div class="t" style="top:531.11px;font-size:17px;line-height:17px;font-weight:400;color:#3b3a39;letter-spacing:-0.6px;left:1158.90px;-webkit-text-stroke:0.3px #3b3a39;">1.2</div>
<div class="r" style="left:1159.40px;top:549.40px;width:22.50px;height:1.50px;background:#2a64b4;"></div>
<div class="t" style="top:515.98px;font-size:24px;line-height:24px;font-weight:400;color:#252423;right:1227.50px;text-align:right;">Sum of Sales</div>
<div class="t" style="top:548.14px;font-size:20.5px;line-height:20.5px;font-weight:400;color:#252423;right:1227.00px;text-align:right;">in Thousands</div>
<div class="t" style="top:500.68px;font-size:24px;line-height:24px;font-weight:400;color:#252423;right:1056.30px;text-align:right;">Sum of</div>
<div class="t" style="top:532.68px;font-size:24px;line-height:24px;font-weight:400;color:#252423;right:1056.30px;text-align:right;">Revenue</div>
<div class="t" style="top:565.24px;font-size:20.5px;line-height:20.5px;font-weight:400;color:#252423;right:1055.80px;text-align:right;">in Thousands</div>
<div class="t" style="top:516.18px;font-size:24px;line-height:24px;font-weight:400;color:#252423;right:884.00px;text-align:right;">Forecast</div>
<div class="t" style="top:548.04px;font-size:20.5px;line-height:20.5px;font-weight:400;color:#252423;right:883.50px;text-align:right;">in Thousands</div>
<div class="t" style="top:531.11px;font-size:17px;line-height:17px;font-weight:400;color:#3b3a39;letter-spacing:-0.6px;left:1672.70px;-webkit-text-stroke:0.3px #3b3a39;">1.2</div>
<div class="r" style="left:1673.20px;top:549.40px;width:22.50px;height:1.50px;background:#2a64b4;"></div>
<div class="t" style="top:516.18px;font-size:24px;line-height:24px;font-weight:400;color:#252423;right:712.00px;text-align:right;">Forecast</div>
<div class="t" style="top:548.04px;font-size:20.5px;line-height:20.5px;font-weight:400;color:#252423;right:711.50px;text-align:right;">in Thousands</div>
<div class="t" style="top:531.11px;font-size:17px;line-height:17px;font-weight:400;color:#3b3a39;letter-spacing:-0.6px;left:1843.50px;-webkit-text-stroke:0.3px #3b3a39;">1.2</div>
<div class="r" style="left:1844.00px;top:549.40px;width:22.50px;height:1.50px;background:#2a64b4;"></div>
<div class="t" style="top:516.18px;font-size:24px;line-height:24px;font-weight:400;color:#252423;right:540.00px;text-align:right;">Forecast</div>
<div class="t" style="top:548.04px;font-size:20.5px;line-height:20.5px;font-weight:400;color:#252423;right:539.50px;text-align:right;">in Thousands</div>
<div class="t" style="top:531.11px;font-size:17px;line-height:17px;font-weight:400;color:#3b3a39;letter-spacing:-0.6px;left:2015.50px;-webkit-text-stroke:0.3px #3b3a39;">1.2</div>
<div class="r" style="left:2016.00px;top:549.40px;width:22.50px;height:1.50px;background:#2a64b4;"></div>
<div class="t" style="top:616.30px;font-size:23.5px;line-height:23.5px;font-weight:700;color:#1b1a19;left:87.00px;">All</div>
<svg class="r" style="left:0;top:0" width="1" height="1"><rect x="56" y="616.30" width="16" height="16.2" fill="none" stroke="#333" stroke-width="1.3"/><path d="M59.8 624.50 H68.6" stroke="#666" stroke-width="1.6"/></svg>
<div class="t" style="top:614.98px;font-size:26px;line-height:26px;font-weight:700;color:#1b1a19;font-family:'Liberation Mono', monospace;right:2259.00px;text-align:right;transform:scaleX(0.915);transform-origin:100% 50%;">609.61</div>
<div class="t" style="top:614.98px;font-size:26px;line-height:26px;font-weight:700;color:#1b1a19;font-family:'Liberation Mono', monospace;right:2086.20px;text-align:right;transform:scaleX(0.915);transform-origin:100% 50%;">1,432.59</div>
<div class="t" style="top:614.98px;font-size:26px;line-height:26px;font-weight:700;color:#1b1a19;font-family:'Liberation Mono', monospace;right:1915.90px;text-align:right;transform:scaleX(0.915);transform-origin:100% 50%;">609.61</div>
<div class="t" style="top:614.98px;font-size:26px;line-height:26px;font-weight:700;color:#1b1a19;font-family:'Liberation Mono', monospace;right:1745.20px;text-align:right;transform:scaleX(0.915);transform-origin:100% 50%;">733.23</div>
<div class="t" style="top:614.98px;font-size:26px;line-height:26px;font-weight:700;color:#1b1a19;font-family:'Liberation Mono', monospace;right:1572.10px;text-align:right;transform:scaleX(0.915);transform-origin:100% 50%;">1,723.09</div>
<div class="t" style="top:614.98px;font-size:26px;line-height:26px;font-weight:700;color:#1b1a19;font-family:'Liberation Mono', monospace;right:1401.90px;text-align:right;transform:scaleX(0.915);transform-origin:100% 50%;">733.23</div>
<div class="t" style="top:614.98px;font-size:26px;line-height:26px;font-weight:700;color:#1b1a19;font-family:'Liberation Mono', monospace;right:1231.00px;text-align:right;transform:scaleX(0.915);transform-origin:100% 50%;">52.98</div>
<div class="t" style="top:614.98px;font-size:26px;line-height:26px;font-weight:700;color:#1b1a19;font-family:'Liberation Mono', monospace;right:1058.30px;text-align:right;transform:scaleX(0.915);transform-origin:100% 50%;">124.51</div>
<div class="t" style="top:614.98px;font-size:26px;line-height:26px;font-weight:700;color:#1b1a19;font-family:'Liberation Mono', monospace;right:887.50px;text-align:right;transform:scaleX(0.915);transform-origin:100% 50%;">77.78</div>
<div class="t" style="top:614.98px;font-size:26px;line-height:26px;font-weight:700;color:#1b1a19;font-family:'Liberation Mono', monospace;right:715.50px;text-align:right;transform:scaleX(0.915);transform-origin:100% 50%;">118.45</div>
<div class="t" style="top:667.85px;font-size:23.5px;line-height:23.5px;font-weight:700;color:#1b1a19;left:87.00px;">Furniture</div>
<svg class="r" style="left:0;top:0" width="1" height="1"><rect x="56" y="668.55" width="16" height="16.2" fill="none" stroke="#333" stroke-width="1.3"/><path d="M59.8 676.75 H68.6" stroke="#666" stroke-width="1.6"/></svg>
<div class="t" style="top:666.53px;font-size:26px;line-height:26px;font-weight:700;color:#1b1a19;font-family:'Liberation Mono', monospace;right:2259.00px;text-align:right;transform:scaleX(0.915);transform-origin:100% 50%;">198.90</div>
<div class="t" style="top:666.53px;font-size:26px;line-height:26px;font-weight:700;color:#1b1a19;font-family:'Liberation Mono', monospace;right:2086.20px;text-align:right;transform:scaleX(0.915);transform-origin:100% 50%;">467.42</div>
<div class="t" style="top:666.53px;font-size:26px;line-height:26px;font-weight:700;color:#1b1a19;font-family:'Liberation Mono', monospace;right:1915.90px;text-align:right;transform:scaleX(0.915);transform-origin:100% 50%;">198.90</div>
<div class="t" style="top:666.53px;font-size:26px;line-height:26px;font-weight:700;color:#1b1a19;font-family:'Liberation Mono', monospace;right:1745.20px;text-align:right;transform:scaleX(0.915);transform-origin:100% 50%;">215.39</div>
<div class="t" style="top:666.53px;font-size:26px;line-height:26px;font-weight:700;color:#1b1a19;font-family:'Liberation Mono', monospace;right:1572.10px;text-align:right;transform:scaleX(0.915);transform-origin:100% 50%;">506.16</div>
<div class="t" style="top:666.53px;font-size:26px;line-height:26px;font-weight:700;color:#1b1a19;font-family:'Liberation Mono', monospace;right:1401.90px;text-align:right;transform:scaleX(0.915);transform-origin:100% 50%;">215.39</div>
<div class="t" style="top:666.53px;font-size:26px;line-height:26px;font-weight:700;color:#1b1a19;font-family:'Liberation Mono', monospace;right:1231.00px;text-align:right;transform:scaleX(0.915);transform-origin:100% 50%;">19.01</div>
<div class="t" style="top:666.53px;font-size:26px;line-height:26px;font-weight:700;color:#1b1a19;font-family:'Liberation Mono', monospace;right:1058.30px;text-align:right;transform:scaleX(0.915);transform-origin:100% 50%;">44.67</div>
<div class="t" style="top:666.53px;font-size:26px;line-height:26px;font-weight:700;color:#1b1a19;font-family:'Liberation Mono', monospace;right:887.50px;text-align:right;transform:scaleX(0.915);transform-origin:100% 50%;">21.88</div>
<div class="t" style="top:666.53px;font-size:26px;line-height:26px;font-weight:700;color:#1b1a19;font-family:'Liberation Mono', monospace;right:715.50px;text-align:right;transform:scaleX(0.915);transform-origin:100% 50%;">37.06</div>
<div class="t" style="top:705.40px;font-size:24px;line-height:24px;font-weight:400;color:#252423;left:97.50px;">Bookcases</div>
<div class="t" style="top:705.51px;font-size:26px;line-height:26px;font-weight:400;color:#252423;font-family:'Liberation Mono', monospace;right:2259.00px;text-align:right;transform:scaleX(0.915);transform-origin:100% 50%;">26.28</div>
<div class="t" style="top:705.51px;font-size:26px;line-height:26px;font-weight:400;color:#252423;font-family:'Liberation Mono', monospace;right:2086.20px;text-align:right;transform:scaleX(0.915);transform-origin:100% 50%;">61.75</div>
<div class="t" style="top:705.51px;font-size:26px;line-height:26px;font-weight:400;color:#252423;font-family:'Liberation Mono', monospace;right:1915.90px;text-align:right;transform:scaleX(0.915);transform-origin:100% 50%;">26.28</div>
<div class="t" style="top:705.51px;font-size:26px;line-height:26px;font-weight:400;color:#252423;font-family:'Liberation Mono', monospace;right:1745.20px;text-align:right;transform:scaleX(0.915);transform-origin:100% 50%;">30.02</div>
<div class="t" style="top:705.51px;font-size:26px;line-height:26px;font-weight:400;color:#252423;font-family:'Liberation Mono', monospace;right:1572.10px;text-align:right;transform:scaleX(0.915);transform-origin:100% 50%;">70.56</div>
<div class="t" style="top:705.51px;font-size:26px;line-height:26px;font-weight:400;color:#252423;font-family:'Liberation Mono', monospace;right:1401.90px;text-align:right;transform:scaleX(0.915);transform-origin:100% 50%;">30.02</div>
<div class="t" style="top:705.51px;font-size:26px;line-height:26px;font-weight:400;color:#252423;font-family:'Liberation Mono', monospace;right:1231.00px;text-align:right;transform:scaleX(0.915);transform-origin:100% 50%;">5.31</div>
<div class="t" style="top:705.51px;font-size:26px;line-height:26px;font-weight:400;color:#252423;font-family:'Liberation Mono', monospace;right:1058.30px;text-align:right;transform:scaleX(0.915);transform-origin:100% 50%;">12.48</div>
<div class="t" style="top:705.51px;font-size:26px;line-height:26px;font-weight:400;color:#252423;font-family:'Liberation Mono', monospace;right:887.50px;text-align:right;transform:scaleX(0.915);transform-origin:100% 50%;">4.08</div>
<div class="t" style="top:705.51px;font-size:26px;line-height:26px;font-weight:400;color:#252423;font-family:'Liberation Mono', monospace;right:715.50px;text-align:right;transform:scaleX(0.915);transform-origin:100% 50%;">2.12</div>
<div class="t" style="top:743.65px;font-size:24px;line-height:24px;font-weight:400;color:#252423;left:97.50px;">Chairs</div>
<div class="t" style="top:743.76px;font-size:26px;line-height:26px;font-weight:400;color:#252423;font-family:'Liberation Mono', monospace;right:2259.00px;text-align:right;transform:scaleX(0.915);transform-origin:100% 50%;">83.92</div>
<div class="t" style="top:743.76px;font-size:26px;line-height:26px;font-weight:400;color:#252423;font-family:'Liberation Mono', monospace;right:2086.20px;text-align:right;transform:scaleX(0.915);transform-origin:100% 50%;">197.21</div>
<div class="t" style="top:743.76px;font-size:26px;line-height:26px;font-weight:400;color:#252423;font-family:'Liberation Mono', monospace;right:1915.90px;text-align:right;transform:scaleX(0.915);transform-origin:100% 50%;">83.92</div>
<div class="t" style="top:743.76px;font-size:26px;line-height:26px;font-weight:400;color:#252423;font-family:'Liberation Mono', monospace;right:1745.20px;text-align:right;transform:scaleX(0.915);transform-origin:100% 50%;">95.55</div>
<div class="t" style="top:743.76px;font-size:26px;line-height:26px;font-weight:400;color:#252423;font-family:'Liberation Mono', monospace;right:1572.10px;text-align:right;transform:scaleX(0.915);transform-origin:100% 50%;">224.55</div>
<div class="t" style="top:743.76px;font-size:26px;line-height:26px;font-weight:400;color:#252423;font-family:'Liberation Mono', monospace;right:1401.90px;text-align:right;transform:scaleX(0.915);transform-origin:100% 50%;">95.55</div>
<div class="t" style="top:743.76px;font-size:26px;line-height:26px;font-weight:400;color:#252423;font-family:'Liberation Mono', monospace;right:1231.00px;text-align:right;transform:scaleX(0.915);transform-origin:100% 50%;">8.49</div>
<div class="t" style="top:743.76px;font-size:26px;line-height:26px;font-weight:400;color:#252423;font-family:'Liberation Mono', monospace;right:1058.30px;text-align:right;transform:scaleX(0.915);transform-origin:100% 50%;">19.96</div>
<div class="t" style="top:743.76px;font-size:26px;line-height:26px;font-weight:400;color:#252423;font-family:'Liberation Mono', monospace;right:887.50px;text-align:right;transform:scaleX(0.915);transform-origin:100% 50%;">4.67</div>
<div class="t" style="top:743.76px;font-size:26px;line-height:26px;font-weight:400;color:#252423;font-family:'Liberation Mono', monospace;right:715.50px;text-align:right;transform:scaleX(0.915);transform-origin:100% 50%;">14.56</div>
<div class="t" style="top:781.90px;font-size:24px;line-height:24px;font-weight:400;color:#252423;left:97.50px;">Furnishings</div>
<div class="t" style="top:782.01px;font-size:26px;line-height:26px;font-weight:400;color:#252423;font-family:'Liberation Mono', monospace;right:2259.00px;text-align:right;transform:scaleX(0.915);transform-origin:100% 50%;">27.87</div>
<div class="t" style="top:782.01px;font-size:26px;line-height:26px;font-weight:400;color:#252423;font-family:'Liberation Mono', monospace;right:2086.20px;text-align:right;transform:scaleX(0.915);transform-origin:100% 50%;">65.50</div>
<div class="t" style="top:782.01px;font-size:26px;line-height:26px;font-weight:400;color:#252423;font-family:'Liberation Mono', monospace;right:1915.90px;text-align:right;transform:scaleX(0.915);transform-origin:100% 50%;">27.87</div>
<div class="t" style="top:782.01px;font-size:26px;line-height:26px;font-weight:400;color:#252423;font-family:'Liberation Mono', monospace;right:1745.20px;text-align:right;transform:scaleX(0.915);transform-origin:100% 50%;">28.92</div>
<div class="t" style="top:782.01px;font-size:26px;line-height:26px;font-weight:400;color:#252423;font-family:'Liberation Mono', monospace;right:1572.10px;text-align:right;transform:scaleX(0.915);transform-origin:100% 50%;">67.95</div>
<div class="t" style="top:782.01px;font-size:26px;line-height:26px;font-weight:400;color:#252423;font-family:'Liberation Mono', monospace;right:1401.90px;text-align:right;transform:scaleX(0.915);transform-origin:100% 50%;">28.92</div>
<div class="t" style="top:782.01px;font-size:26px;line-height:26px;font-weight:400;color:#252423;font-family:'Liberation Mono', monospace;right:1231.00px;text-align:right;transform:scaleX(0.915);transform-origin:100% 50%;">1.46</div>
<div class="t" style="top:782.01px;font-size:26px;line-height:26px;font-weight:400;color:#252423;font-family:'Liberation Mono', monospace;right:1058.30px;text-align:right;transform:scaleX(0.915);transform-origin:100% 50%;">3.42</div>
<div class="t" style="top:782.01px;font-size:26px;line-height:26px;font-weight:400;color:#252423;font-family:'Liberation Mono', monospace;right:887.50px;text-align:right;transform:scaleX(0.915);transform-origin:100% 50%;">1.72</div>
<div class="t" style="top:782.01px;font-size:26px;line-height:26px;font-weight:400;color:#252423;font-family:'Liberation Mono', monospace;right:715.50px;text-align:right;transform:scaleX(0.915);transform-origin:100% 50%;">6.71</div>
<div class="t" style="top:820.15px;font-size:24px;line-height:24px;font-weight:400;color:#252423;left:97.50px;">Tables</div>
<div class="t" style="top:820.26px;font-size:26px;line-height:26px;font-weight:400;color:#252423;font-family:'Liberation Mono', monospace;right:2259.00px;text-align:right;transform:scaleX(0.915);transform-origin:100% 50%;">60.83</div>
<div class="t" style="top:820.26px;font-size:26px;line-height:26px;font-weight:400;color:#252423;font-family:'Liberation Mono', monospace;right:2086.20px;text-align:right;transform:scaleX(0.915);transform-origin:100% 50%;">142.96</div>
<div class="t" style="top:820.26px;font-size:26px;line-height:26px;font-weight:400;color:#252423;font-family:'Liberation Mono', monospace;right:1915.90px;text-align:right;transform:scaleX(0.915);transform-origin:100% 50%;">60.83</div>
<div class="t" style="top:820.26px;font-size:26px;line-height:26px;font-weight:400;color:#252423;font-family:'Liberation Mono', monospace;right:1745.20px;text-align:right;transform:scaleX(0.915);transform-origin:100% 50%;">60.89</div>
<div class="t" style="top:820.26px;font-size:26px;line-height:26px;font-weight:400;color:#252423;font-family:'Liberation Mono', monospace;right:1572.10px;text-align:right;transform:scaleX(0.915);transform-origin:100% 50%;">143.10</div>
<div class="t" style="top:820.26px;font-size:26px;line-height:26px;font-weight:400;color:#252423;font-family:'Liberation Mono', monospace;right:1401.90px;text-align:right;transform:scaleX(0.915);transform-origin:100% 50%;">60.89</div>
<div class="t" style="top:820.26px;font-size:26px;line-height:26px;font-weight:400;color:#252423;font-family:'Liberation Mono', monospace;right:1231.00px;text-align:right;transform:scaleX(0.915);transform-origin:100% 50%;">3.75</div>
<div class="t" style="top:820.26px;font-size:26px;line-height:26px;font-weight:400;color:#252423;font-family:'Liberation Mono', monospace;right:1058.30px;text-align:right;transform:scaleX(0.915);transform-origin:100% 50%;">8.81</div>
<div class="t" style="top:820.26px;font-size:26px;line-height:26px;font-weight:400;color:#252423;font-family:'Liberation Mono', monospace;right:887.50px;text-align:right;transform:scaleX(0.915);transform-origin:100% 50%;">11.41</div>
<div class="t" style="top:820.26px;font-size:26px;line-height:26px;font-weight:400;color:#252423;font-family:'Liberation Mono', monospace;right:715.50px;text-align:right;transform:scaleX(0.915);transform-origin:100% 50%;">13.66</div>
<div class="t" style="top:861.85px;font-size:23.5px;line-height:23.5px;font-weight:700;color:#1b1a19;left:87.00px;">Office Supplies</div>
<svg class="r" style="left:0;top:0" width="1" height="1"><rect x="56" y="862.55" width="16" height="16.2" fill="none" stroke="#333" stroke-width="1.3"/><path d="M59.8 870.75 H68.6" stroke="#666" stroke-width="1.6"/></svg>
<div class="t" style="top:860.53px;font-size:26px;line-height:26px;font-weight:700;color:#1b1a19;font-family:'Liberation Mono', monospace;right:2259.00px;text-align:right;transform:scaleX(0.915);transform-origin:100% 50%;">184.35</div>
<div class="t" style="top:860.53px;font-size:26px;line-height:26px;font-weight:700;color:#1b1a19;font-family:'Liberation Mono', monospace;right:2086.20px;text-align:right;transform:scaleX(0.915);transform-origin:100% 50%;">433.22</div>
<div class="t" style="top:860.53px;font-size:26px;line-height:26px;font-weight:700;color:#1b1a19;font-family:'Liberation Mono', monospace;right:1915.90px;text-align:right;transform:scaleX(0.915);transform-origin:100% 50%;">184.35</div>
<div class="t" style="top:860.53px;font-size:26px;line-height:26px;font-weight:700;color:#1b1a19;font-family:'Liberation Mono', monospace;right:1745.20px;text-align:right;transform:scaleX(0.915);transform-origin:100% 50%;">246.11</div>
<div class="t" style="top:860.53px;font-size:26px;line-height:26px;font-weight:700;color:#1b1a19;font-family:'Liberation Mono', monospace;right:1572.10px;text-align:right;transform:scaleX(0.915);transform-origin:100% 50%;">578.36</div>
<div class="t" style="top:860.53px;font-size:26px;line-height:26px;font-weight:700;color:#1b1a19;font-family:'Liberation Mono', monospace;right:1401.90px;text-align:right;transform:scaleX(0.915);transform-origin:100% 50%;">246.11</div>
<div class="t" style="top:860.53px;font-size:26px;line-height:26px;font-weight:700;color:#1b1a19;font-family:'Liberation Mono', monospace;right:1231.00px;text-align:right;transform:scaleX(0.915);transform-origin:100% 50%;">16.91</div>
<div class="t" style="top:860.53px;font-size:26px;line-height:26px;font-weight:700;color:#1b1a19;font-family:'Liberation Mono', monospace;right:1058.30px;text-align:right;transform:scaleX(0.915);transform-origin:100% 50%;">39.74</div>
<div class="t" style="top:860.53px;font-size:26px;line-height:26px;font-weight:700;color:#1b1a19;font-family:'Liberation Mono', monospace;right:887.50px;text-align:right;transform:scaleX(0.915);transform-origin:100% 50%;">23.04</div>
<div class="t" style="top:860.53px;font-size:26px;line-height:26px;font-weight:700;color:#1b1a19;font-family:'Liberation Mono', monospace;right:715.50px;text-align:right;transform:scaleX(0.915);transform-origin:100% 50%;">31.47</div>
<div class="t" style="top:900.08px;font-size:24px;line-height:24px;font-weight:400;color:#252423;left:97.50px;">Appliances</div>
<div class="t" style="top:900.18px;font-size:26px;line-height:26px;font-weight:400;color:#252423;font-family:'Liberation Mono', monospace;right:2259.00px;text-align:right;transform:scaleX(0.915);transform-origin:100% 50%;">26.05</div>
<div class="t" style="top:900.18px;font-size:26px;line-height:26px;font-weight:400;color:#252423;font-family:'Liberation Mono', monospace;right:2086.20px;text-align:right;transform:scaleX(0.915);transform-origin:100% 50%;">61.22</div>
<div class="t" style="top:900.18px;font-size:26px;line-height:26px;font-weight:400;color:#252423;font-family:'Liberation Mono', monospace;right:1915.90px;text-align:right;transform:scaleX(0.915);transform-origin:100% 50%;">26.05</div>
<div class="t" style="top:900.18px;font-size:26px;line-height:26px;font-weight:400;color:#252423;font-family:'Liberation Mono', monospace;right:1745.20px;text-align:right;transform:scaleX(0.915);transform-origin:100% 50%;">42.93</div>
<div class="t" style="top:900.18px;font-size:26px;line-height:26px;font-weight:400;color:#252423;font-family:'Liberation Mono', monospace;right:1572.10px;text-align:right;transform:scaleX(0.915);transform-origin:100% 50%;">100.88</div>
<div class="t" style="top:900.18px;font-size:26px;line-height:26px;font-weight:400;color:#252423;font-family:'Liberation Mono', monospace;right:1401.90px;text-align:right;transform:scaleX(0.915);transform-origin:100% 50%;">42.93</div>
<div class="t" style="top:900.18px;font-size:26px;line-height:26px;font-weight:400;color:#252423;font-family:'Liberation Mono', monospace;right:1231.00px;text-align:right;transform:scaleX(0.915);transform-origin:100% 50%;">3.16</div>
<div class="t" style="top:900.18px;font-size:26px;line-height:26px;font-weight:400;color:#252423;font-family:'Liberation Mono', monospace;right:1058.30px;text-align:right;transform:scaleX(0.915);transform-origin:100% 50%;">7.43</div>
<div class="t" style="top:900.18px;font-size:26px;line-height:26px;font-weight:400;color:#252423;font-family:'Liberation Mono', monospace;right:887.50px;text-align:right;transform:scaleX(0.915);transform-origin:100% 50%;">3.34</div>
<div class="t" style="top:900.18px;font-size:26px;line-height:26px;font-weight:400;color:#252423;font-family:'Liberation Mono', monospace;right:715.50px;text-align:right;transform:scaleX(0.915);transform-origin:100% 50%;">6.75</div>
<div class="t" style="top:938.68px;font-size:24px;line-height:24px;font-weight:400;color:#252423;left:97.50px;">Art</div>
<div class="t" style="top:938.78px;font-size:26px;line-height:26px;font-weight:400;color:#252423;font-family:'Liberation Mono', monospace;right:2259.00px;text-align:right;transform:scaleX(0.915);transform-origin:100% 50%;">5.96</div>
<div class="t" style="top:938.78px;font-size:26px;line-height:26px;font-weight:400;color:#252423;font-family:'Liberation Mono', monospace;right:2086.20px;text-align:right;transform:scaleX(0.915);transform-origin:100% 50%;">14.01</div>
<div class="t" style="top:938.78px;font-size:26px;line-height:26px;font-weight:400;color:#252423;font-family:'Liberation Mono', monospace;right:1915.90px;text-align:right;transform:scaleX(0.915);transform-origin:100% 50%;">5.96</div>
<div class="t" style="top:938.78px;font-size:26px;line-height:26px;font-weight:400;color:#252423;font-family:'Liberation Mono', monospace;right:1745.20px;text-align:right;transform:scaleX(0.915);transform-origin:100% 50%;">8.86</div>
<div class="t" style="top:938.78px;font-size:26px;line-height:26px;font-weight:400;color:#252423;font-family:'Liberation Mono', monospace;right:1572.10px;text-align:right;transform:scaleX(0.915);transform-origin:100% 50%;">20.83</div>
<div class="t" style="top:938.78px;font-size:26px;line-height:26px;font-weight:400;color:#252423;font-family:'Liberation Mono', monospace;right:1401.90px;text-align:right;transform:scaleX(0.915);transform-origin:100% 50%;">8.86</div>
<div class="t" style="top:938.78px;font-size:26px;line-height:26px;font-weight:400;color:#252423;font-family:'Liberation Mono', monospace;right:1231.00px;text-align:right;transform:scaleX(0.915);transform-origin:100% 50%;">1.02</div>
<div class="t" style="top:938.78px;font-size:26px;line-height:26px;font-weight:400;color:#252423;font-family:'Liberation Mono', monospace;right:1058.30px;text-align:right;transform:scaleX(0.915);transform-origin:100% 50%;">2.39</div>
<div class="t" style="top:938.78px;font-size:26px;line-height:26px;font-weight:400;color:#252423;font-family:'Liberation Mono', monospace;right:887.50px;text-align:right;transform:scaleX(0.915);transform-origin:100% 50%;">0.64</div>
<div class="t" style="top:938.78px;font-size:26px;line-height:26px;font-weight:400;color:#252423;font-family:'Liberation Mono', monospace;right:715.50px;text-align:right;transform:scaleX(0.915);transform-origin:100% 50%;">1.39</div>
<div class="t" style="top:977.28px;font-size:24px;line-height:24px;font-weight:400;color:#252423;left:97.50px;">Binders</div>
<div class="t" style="top:977.38px;font-size:26px;line-height:26px;font-weight:400;color:#252423;font-family:'Liberation Mono', monospace;right:2259.00px;text-align:right;transform:scaleX(0.915);transform-origin:100% 50%;">50.09</div>
<div class="t" style="top:977.38px;font-size:26px;line-height:26px;font-weight:400;color:#252423;font-family:'Liberation Mono', monospace;right:2086.20px;text-align:right;transform:scaleX(0.915);transform-origin:100% 50%;">117.71</div>
<div class="t" style="top:977.38px;font-size:26px;line-height:26px;font-weight:400;color:#252423;font-family:'Liberation Mono', monospace;right:1915.90px;text-align:right;transform:scaleX(0.915);transform-origin:100% 50%;">50.09</div>
<div class="t" style="top:977.38px;font-size:26px;line-height:26px;font-weight:400;color:#252423;font-family:'Liberation Mono', monospace;right:1745.20px;text-align:right;transform:scaleX(0.915);transform-origin:100% 50%;">72.79</div>
<div class="t" style="top:977.38px;font-size:26px;line-height:26px;font-weight:400;color:#252423;font-family:'Liberation Mono', monospace;right:1572.10px;text-align:right;transform:scaleX(0.915);transform-origin:100% 50%;">171.05</div>
<div class="t" style="top:977.38px;font-size:26px;line-height:26px;font-weight:400;color:#252423;font-family:'Liberation Mono', monospace;right:1401.90px;text-align:right;transform:scaleX(0.915);transform-origin:100% 50%;">72.79</div>
<div class="t" style="top:977.38px;font-size:26px;line-height:26px;font-weight:400;color:#252423;font-family:'Liberation Mono', monospace;right:1231.00px;text-align:right;transform:scaleX(0.915);transform-origin:100% 50%;">2.43</div>
<div class="t" style="top:977.38px;font-size:26px;line-height:26px;font-weight:400;color:#252423;font-family:'Liberation Mono', monospace;right:1058.30px;text-align:right;transform:scaleX(0.915);transform-origin:100% 50%;">5.70</div>
<div class="t" style="top:977.38px;font-size:26px;line-height:26px;font-weight:400;color:#252423;font-family:'Liberation Mono', monospace;right:887.50px;text-align:right;transform:scaleX(0.915);transform-origin:100% 50%;">10.14</div>
<div class="t" style="top:977.38px;font-size:26px;line-height:26px;font-weight:400;color:#252423;font-family:'Liberation Mono', monospace;right:715.50px;text-align:right;transform:scaleX(0.915);transform-origin:100% 50%;">6.49</div>
<div class="t" style="top:1015.88px;font-size:24px;line-height:24px;font-weight:400;color:#252423;left:97.50px;">Envelopes</div>
<div class="t" style="top:1015.98px;font-size:26px;line-height:26px;font-weight:400;color:#252423;font-family:'Liberation Mono', monospace;right:2259.00px;text-align:right;transform:scaleX(0.915);transform-origin:100% 50%;">4.73</div>
<div class="t" style="top:1015.98px;font-size:26px;line-height:26px;font-weight:400;color:#252423;font-family:'Liberation Mono', monospace;right:2086.20px;text-align:right;transform:scaleX(0.915);transform-origin:100% 50%;">11.12</div>
<div class="t" style="top:1015.98px;font-size:26px;line-height:26px;font-weight:400;color:#252423;font-family:'Liberation Mono', monospace;right:1915.90px;text-align:right;transform:scaleX(0.915);transform-origin:100% 50%;">4.73</div>
<div class="t" style="top:1015.98px;font-size:26px;line-height:26px;font-weight:400;color:#252423;font-family:'Liberation Mono', monospace;right:1745.20px;text-align:right;transform:scaleX(0.915);transform-origin:100% 50%;">3.38</div>
<div class="t" style="top:1015.98px;font-size:26px;line-height:26px;font-weight:400;color:#252423;font-family:'Liberation Mono', monospace;right:1572.10px;text-align:right;transform:scaleX(0.915);transform-origin:100% 50%;">7.94</div>
<div class="t" style="top:1015.98px;font-size:26px;line-height:26px;font-weight:400;color:#252423;font-family:'Liberation Mono', monospace;right:1401.90px;text-align:right;transform:scaleX(0.915);transform-origin:100% 50%;">3.38</div>
<div class="t" style="top:1015.98px;font-size:26px;line-height:26px;font-weight:400;color:#252423;font-family:'Liberation Mono', monospace;right:1231.00px;text-align:right;transform:scaleX(0.915);transform-origin:100% 50%;">0.08</div>
<div class="t" style="top:1015.98px;font-size:26px;line-height:26px;font-weight:400;color:#252423;font-family:'Liberation Mono', monospace;right:1058.30px;text-align:right;transform:scaleX(0.915);transform-origin:100% 50%;">0.19</div>
<div class="t" style="top:1015.98px;font-size:26px;line-height:26px;font-weight:400;color:#252423;font-family:'Liberation Mono', monospace;right:887.50px;text-align:right;transform:scaleX(0.915);transform-origin:100% 50%;">0.43</div>
<div class="t" style="top:1015.98px;font-size:26px;line-height:26px;font-weight:400;color:#252423;font-family:'Liberation Mono', monospace;right:715.50px;text-align:right;transform:scaleX(0.915);transform-origin:100% 50%;">0.52</div>
<div class="t" style="top:1054.48px;font-size:24px;line-height:24px;font-weight:400;color:#252423;left:97.50px;">Fasteners</div>
<div class="t" style="top:1054.58px;font-size:26px;line-height:26px;font-weight:400;color:#252423;font-family:'Liberation Mono', monospace;right:2259.00px;text-align:right;transform:scaleX(0.915);transform-origin:100% 50%;">0.96</div>
<div class="t" style="top:1054.58px;font-size:26px;line-height:26px;font-weight:400;color:#252423;font-family:'Liberation Mono', monospace;right:2086.20px;text-align:right;transform:scaleX(0.915);transform-origin:100% 50%;">2.26</div>
<div class="t" style="top:1054.58px;font-size:26px;line-height:26px;font-weight:400;color:#252423;font-family:'Liberation Mono', monospace;right:1915.90px;text-align:right;transform:scaleX(0.915);transform-origin:100% 50%;">0.96</div>
<div class="t" style="top:1054.58px;font-size:26px;line-height:26px;font-weight:400;color:#252423;font-family:'Liberation Mono', monospace;right:1745.20px;text-align:right;transform:scaleX(0.915);transform-origin:100% 50%;">0.86</div>
<div class="t" style="top:1054.58px;font-size:26px;line-height:26px;font-weight:400;color:#252423;font-family:'Liberation Mono', monospace;right:1572.10px;text-align:right;transform:scaleX(0.915);transform-origin:100% 50%;">2.02</div>
<div class="t" style="top:1054.58px;font-size:26px;line-height:26px;font-weight:400;color:#252423;font-family:'Liberation Mono', monospace;right:1401.90px;text-align:right;transform:scaleX(0.915);transform-origin:100% 50%;">0.86</div>
<div class="t" style="top:1054.58px;font-size:26px;line-height:26px;font-weight:400;color:#252423;font-family:'Liberation Mono', monospace;right:1231.00px;text-align:right;transform:scaleX(0.915);transform-origin:100% 50%;">0.03</div>
<div class="t" style="top:1054.58px;font-size:26px;line-height:26px;font-weight:400;color:#252423;font-family:'Liberation Mono', monospace;right:1058.30px;text-align:right;transform:scaleX(0.915);transform-origin:100% 50%;">0.07</div>
<div class="t" style="top:1054.58px;font-size:26px;line-height:26px;font-weight:400;color:#252423;font-family:'Liberation Mono', monospace;right:887.50px;text-align:right;transform:scaleX(0.915);transform-origin:100% 50%;">0.07</div>
<div class="t" style="top:1054.58px;font-size:26px;line-height:26px;font-weight:400;color:#252423;font-family:'Liberation Mono', monospace;right:715.50px;text-align:right;transform:scaleX(0.915);transform-origin:100% 50%;">0.14</div>
<div class="t" style="top:1093.08px;font-size:24px;line-height:24px;font-weight:400;color:#252423;left:97.50px;">Labels</div>
<div class="t" style="top:1093.18px;font-size:26px;line-height:26px;font-weight:400;color:#252423;font-family:'Liberation Mono', monospace;right:2259.00px;text-align:right;transform:scaleX(0.915);transform-origin:100% 50%;">2.83</div>
<div class="t" style="top:1093.18px;font-size:26px;line-height:26px;font-weight:400;color:#252423;font-family:'Liberation Mono', monospace;right:2086.20px;text-align:right;transform:scaleX(0.915);transform-origin:100% 50%;">6.64</div>
<div class="t" style="top:1093.18px;font-size:26px;line-height:26px;font-weight:400;color:#252423;font-family:'Liberation Mono', monospace;right:1915.90px;text-align:right;transform:scaleX(0.915);transform-origin:100% 50%;">2.83</div>
<div class="t" style="top:1093.18px;font-size:26px;line-height:26px;font-weight:400;color:#252423;font-family:'Liberation Mono', monospace;right:1745.20px;text-align:right;transform:scaleX(0.915);transform-origin:100% 50%;">3.86</div>
<div class="t" style="top:1093.18px;font-size:26px;line-height:26px;font-weight:400;color:#252423;font-family:'Liberation Mono', monospace;right:1572.10px;text-align:right;transform:scaleX(0.915);transform-origin:100% 50%;">9.07</div>
<div class="t" style="top:1093.18px;font-size:26px;line-height:26px;font-weight:400;color:#252423;font-family:'Liberation Mono', monospace;right:1401.90px;text-align:right;transform:scaleX(0.915);transform-origin:100% 50%;">3.86</div>
<div class="t" style="top:1093.18px;font-size:26px;line-height:26px;font-weight:400;color:#252423;font-family:'Liberation Mono', monospace;right:1231.00px;text-align:right;transform:scaleX(0.915);transform-origin:100% 50%;">0.18</div>
<div class="t" style="top:1093.18px;font-size:26px;line-height:26px;font-weight:400;color:#252423;font-family:'Liberation Mono', monospace;right:1058.30px;text-align:right;transform:scaleX(0.915);transform-origin:100% 50%;">0.42</div>
<div class="t" style="top:1093.18px;font-size:26px;line-height:26px;font-weight:400;color:#252423;font-family:'Liberation Mono', monospace;right:887.50px;text-align:right;transform:scaleX(0.915);transform-origin:100% 50%;">0.39</div>
<div class="t" style="top:1093.18px;font-size:26px;line-height:26px;font-weight:400;color:#252423;font-family:'Liberation Mono', monospace;right:715.50px;text-align:right;transform:scaleX(0.915);transform-origin:100% 50%;">0.21</div>
<div class="t" style="top:1131.68px;font-size:24px;line-height:24px;font-weight:400;color:#252423;left:97.50px;">Paper</div>
<div class="t" style="top:1131.78px;font-size:26px;line-height:26px;font-weight:400;color:#252423;font-family:'Liberation Mono', monospace;right:2259.00px;text-align:right;transform:scaleX(0.915);transform-origin:100% 50%;">20.66</div>
<div class="t" style="top:1131.78px;font-size:26px;line-height:26px;font-weight:400;color:#252423;font-family:'Liberation Mono', monospace;right:2086.20px;text-align:right;transform:scaleX(0.915);transform-origin:100% 50%;">48.56</div>
<div class="t" style="top:1131.78px;font-size:26px;line-height:26px;font-weight:400;color:#252423;font-family:'Liberation Mono', monospace;right:1915.90px;text-align:right;transform:scaleX(0.915);transform-origin:100% 50%;">20.66</div>
<div class="t" style="top:1131.78px;font-size:26px;line-height:26px;font-weight:400;color:#252423;font-family:'Liberation Mono', monospace;right:1745.20px;text-align:right;transform:scaleX(0.915);transform-origin:100% 50%;">27.71</div>
<div class="t" style="top:1131.78px;font-size:26px;line-height:26px;font-weight:400;color:#252423;font-family:'Liberation Mono', monospace;right:1572.10px;text-align:right;transform:scaleX(0.915);transform-origin:100% 50%;">65.12</div>
<div class="t" style="top:1131.78px;font-size:26px;line-height:26px;font-weight:400;color:#252423;font-family:'Liberation Mono', monospace;right:1401.90px;text-align:right;transform:scaleX(0.915);transform-origin:100% 50%;">27.71</div>
<div class="t" style="top:1131.78px;font-size:26px;line-height:26px;font-weight:400;color:#252423;font-family:'Liberation Mono', monospace;right:1231.00px;text-align:right;transform:scaleX(0.915);transform-origin:100% 50%;">2.20</div>
<div class="t" style="top:1131.78px;font-size:26px;line-height:26px;font-weight:400;color:#252423;font-family:'Liberation Mono', monospace;right:1058.30px;text-align:right;transform:scaleX(0.915);transform-origin:100% 50%;">5.18</div>
<div class="t" style="top:1131.78px;font-size:26px;line-height:26px;font-weight:400;color:#252423;font-family:'Liberation Mono', monospace;right:887.50px;text-align:right;transform:scaleX(0.915);transform-origin:100% 50%;">1.85</div>
<div class="t" style="top:1131.78px;font-size:26px;line-height:26px;font-weight:400;color:#252423;font-family:'Liberation Mono', monospace;right:715.50px;text-align:right;transform:scaleX(0.915);transform-origin:100% 50%;">3.62</div>
<div class="t" style="top:1170.28px;font-size:24px;line-height:24px;font-weight:400;color:#252423;left:97.50px;">Storage</div>
<div class="t" style="top:1170.38px;font-size:26px;line-height:26px;font-weight:400;color:#252423;font-family:'Liberation Mono', monospace;right:2259.00px;text-align:right;transform:scaleX(0.915);transform-origin:100% 50%;">58.79</div>
<div class="t" style="top:1170.38px;font-size:26px;line-height:26px;font-weight:400;color:#252423;font-family:'Liberation Mono', monospace;right:2086.20px;text-align:right;transform:scaleX(0.915);transform-origin:100% 50%;">138.15</div>
<div class="t" style="top:1170.38px;font-size:26px;line-height:26px;font-weight:400;color:#252423;font-family:'Liberation Mono', monospace;right:1915.90px;text-align:right;transform:scaleX(0.915);transform-origin:100% 50%;">58.79</div>
<div class="t" style="top:1170.38px;font-size:26px;line-height:26px;font-weight:400;color:#252423;font-family:'Liberation Mono', monospace;right:1745.20px;text-align:right;transform:scaleX(0.915);transform-origin:100% 50%;">69.68</div>
<div class="t" style="top:1170.38px;font-size:26px;line-height:26px;font-weight:400;color:#252423;font-family:'Liberation Mono', monospace;right:1572.10px;text-align:right;transform:scaleX(0.915);transform-origin:100% 50%;">163.74</div>
<div class="t" style="top:1170.38px;font-size:26px;line-height:26px;font-weight:400;color:#252423;font-family:'Liberation Mono', monospace;right:1401.90px;text-align:right;transform:scaleX(0.915);transform-origin:100% 50%;">69.68</div>
<div class="t" style="top:1170.38px;font-size:26px;line-height:26px;font-weight:400;color:#252423;font-family:'Liberation Mono', monospace;right:1231.00px;text-align:right;transform:scaleX(0.915);transform-origin:100% 50%;">7.70</div>
<div class="t" style="top:1170.38px;font-size:26px;line-height:26px;font-weight:400;color:#252423;font-family:'Liberation Mono', monospace;right:1058.30px;text-align:right;transform:scaleX(0.915);transform-origin:100% 50%;">18.10</div>
<div class="t" style="top:1170.38px;font-size:26px;line-height:26px;font-weight:400;color:#252423;font-family:'Liberation Mono', monospace;right:887.50px;text-align:right;transform:scaleX(0.915);transform-origin:100% 50%;">6.10</div>
<div class="t" style="top:1170.38px;font-size:26px;line-height:26px;font-weight:400;color:#252423;font-family:'Liberation Mono', monospace;right:715.50px;text-align:right;transform:scaleX(0.915);transform-origin:100% 50%;">11.91</div>
<div class="t" style="top:1208.88px;font-size:24px;line-height:24px;font-weight:400;color:#252423;left:97.50px;">Supplies</div>
<div class="t" style="top:1208.98px;font-size:26px;line-height:26px;font-weight:400;color:#252423;font-family:'Liberation Mono', monospace;right:2259.00px;text-align:right;transform:scaleX(0.915);transform-origin:100% 50%;">14.28</div>
<div class="t" style="top:1208.98px;font-size:26px;line-height:26px;font-weight:400;color:#252423;font-family:'Liberation Mono', monospace;right:2086.20px;text-align:right;transform:scaleX(0.915);transform-origin:100% 50%;">33.55</div>
<div class="t" style="top:1208.98px;font-size:26px;line-height:26px;font-weight:400;color:#252423;font-family:'Liberation Mono', monospace;right:1915.90px;text-align:right;transform:scaleX(0.915);transform-origin:100% 50%;">14.28</div>
<div class="t" style="top:1208.98px;font-size:26px;line-height:26px;font-weight:400;color:#252423;font-family:'Liberation Mono', monospace;right:1745.20px;text-align:right;transform:scaleX(0.915);transform-origin:100% 50%;">16.05</div>
<div class="t" style="top:1208.98px;font-size:26px;line-height:26px;font-weight:400;color:#252423;font-family:'Liberation Mono', monospace;right:1572.10px;text-align:right;transform:scaleX(0.915);transform-origin:100% 50%;">37.72</div>
<div class="t" style="top:1208.98px;font-size:26px;line-height:26px;font-weight:400;color:#252423;font-family:'Liberation Mono', monospace;right:1401.90px;text-align:right;transform:scaleX(0.915);transform-origin:100% 50%;">16.05</div>
<div class="t" style="top:1208.98px;font-size:26px;line-height:26px;font-weight:400;color:#252423;font-family:'Liberation Mono', monospace;right:1231.00px;text-align:right;transform:scaleX(0.915);transform-origin:100% 50%;">0.11</div>
<div class="t" style="top:1208.98px;font-size:26px;line-height:26px;font-weight:400;color:#252423;font-family:'Liberation Mono', monospace;right:1058.30px;text-align:right;transform:scaleX(0.915);transform-origin:100% 50%;">0.26</div>
<div class="t" style="top:1208.98px;font-size:26px;line-height:26px;font-weight:400;color:#252423;font-family:'Liberation Mono', monospace;right:887.50px;text-align:right;transform:scaleX(0.915);transform-origin:100% 50%;">0.07</div>
<div class="t" style="top:1208.98px;font-size:26px;line-height:26px;font-weight:400;color:#252423;font-family:'Liberation Mono', monospace;right:715.50px;text-align:right;transform:scaleX(0.915);transform-origin:100% 50%;">0.45</div>
<div class="t" style="top:1250.05px;font-size:23.5px;line-height:23.5px;font-weight:700;color:#1b1a19;left:87.00px;">Technology</div>
<svg class="r" style="left:0;top:0" width="1" height="1"><rect x="56" y="1250.75" width="16" height="16.2" fill="none" stroke="#333" stroke-width="1.3"/><path d="M59.8 1258.95 H68.6" stroke="#666" stroke-width="1.6"/></svg>
<div class="t" style="top:1248.73px;font-size:26px;line-height:26px;font-weight:700;color:#1b1a19;font-family:'Liberation Mono', monospace;right:2259.00px;text-align:right;transform:scaleX(0.915);transform-origin:100% 50%;">226.36</div>
<div class="t" style="top:1248.73px;font-size:26px;line-height:26px;font-weight:700;color:#1b1a19;font-family:'Liberation Mono', monospace;right:2086.20px;text-align:right;transform:scaleX(0.915);transform-origin:100% 50%;">531.96</div>
<div class="t" style="top:1248.73px;font-size:26px;line-height:26px;font-weight:700;color:#1b1a19;font-family:'Liberation Mono', monospace;right:1915.90px;text-align:right;transform:scaleX(0.915);transform-origin:100% 50%;">226.36</div>
<div class="t" style="top:1248.73px;font-size:26px;line-height:26px;font-weight:700;color:#1b1a19;font-family:'Liberation Mono', monospace;right:1745.20px;text-align:right;transform:scaleX(0.915);transform-origin:100% 50%;">271.73</div>
<div class="t" style="top:1248.73px;font-size:26px;line-height:26px;font-weight:700;color:#1b1a19;font-family:'Liberation Mono', monospace;right:1572.10px;text-align:right;transform:scaleX(0.915);transform-origin:100% 50%;">638.57</div>
<div class="t" style="top:1248.73px;font-size:26px;line-height:26px;font-weight:700;color:#1b1a19;font-family:'Liberation Mono', monospace;right:1401.90px;text-align:right;transform:scaleX(0.915);transform-origin:100% 50%;">271.73</div>
<div class="t" style="top:1248.73px;font-size:26px;line-height:26px;font-weight:700;color:#1b1a19;font-family:'Liberation Mono', monospace;right:1231.00px;text-align:right;transform:scaleX(0.915);transform-origin:100% 50%;">17.06</div>
<div class="t" style="top:1248.73px;font-size:26px;line-height:26px;font-weight:700;color:#1b1a19;font-family:'Liberation Mono', monospace;right:1058.30px;text-align:right;transform:scaleX(0.915);transform-origin:100% 50%;">40.09</div>
<div class="t" style="top:1248.73px;font-size:26px;line-height:26px;font-weight:700;color:#1b1a19;font-family:'Liberation Mono', monospace;right:887.50px;text-align:right;transform:scaleX(0.915);transform-origin:100% 50%;">32.86</div>
<div class="t" style="top:1248.73px;font-size:26px;line-height:26px;font-weight:700;color:#1b1a19;font-family:'Liberation Mono', monospace;right:715.50px;text-align:right;transform:scaleX(0.915);transform-origin:100% 50%;">49.92</div>
<div class="t" style="top:1287.60px;font-size:24px;line-height:24px;font-weight:400;color:#252423;left:97.50px;">Accessories</div>
<div class="t" style="top:1287.71px;font-size:26px;line-height:26px;font-weight:400;color:#252423;font-family:'Liberation Mono', monospace;right:2259.00px;text-align:right;transform:scaleX(0.915);transform-origin:100% 50%;">41.90</div>
<div class="t" style="top:1287.71px;font-size:26px;line-height:26px;font-weight:400;color:#252423;font-family:'Liberation Mono', monospace;right:2086.20px;text-align:right;transform:scaleX(0.915);transform-origin:100% 50%;">98.46</div>
<div class="t" style="top:1287.71px;font-size:26px;line-height:26px;font-weight:400;color:#252423;font-family:'Liberation Mono', monospace;right:1915.90px;text-align:right;transform:scaleX(0.915);transform-origin:100% 50%;">41.90</div>
<div class="t" style="top:1287.71px;font-size:26px;line-height:26px;font-weight:400;color:#252423;font-family:'Liberation Mono', monospace;right:1745.20px;text-align:right;transform:scaleX(0.915);transform-origin:100% 50%;">59.95</div>
<div class="t" style="top:1287.71px;font-size:26px;line-height:26px;font-weight:400;color:#252423;font-family:'Liberation Mono', monospace;right:1572.10px;text-align:right;transform:scaleX(0.915);transform-origin:100% 50%;">140.87</div>
<div class="t" style="top:1287.71px;font-size:26px;line-height:26px;font-weight:400;color:#252423;font-family:'Liberation Mono', monospace;right:1401.90px;text-align:right;transform:scaleX(0.915);transform-origin:100% 50%;">59.95</div>
<div class="t" style="top:1287.71px;font-size:26px;line-height:26px;font-weight:400;color:#252423;font-family:'Liberation Mono', monospace;right:1231.00px;text-align:right;transform:scaleX(0.915);transform-origin:100% 50%;">4.85</div>
<div class="t" style="top:1287.71px;font-size:26px;line-height:26px;font-weight:400;color:#252423;font-family:'Liberation Mono', monospace;right:1058.30px;text-align:right;transform:scaleX(0.915);transform-origin:100% 50%;">11.39</div>
<div class="t" style="top:1287.71px;font-size:26px;line-height:26px;font-weight:400;color:#252423;font-family:'Liberation Mono', monospace;right:887.50px;text-align:right;transform:scaleX(0.915);transform-origin:100% 50%;">5.03</div>
<div class="t" style="top:1287.71px;font-size:26px;line-height:26px;font-weight:400;color:#252423;font-family:'Liberation Mono', monospace;right:715.50px;text-align:right;transform:scaleX(0.915);transform-origin:100% 50%;">8.39</div>
<div class="t" style="top:1326.25px;font-size:24px;line-height:24px;font-weight:400;color:#252423;left:97.50px;">Copiers</div>
<div class="t" style="top:1326.36px;font-size:26px;line-height:26px;font-weight:400;color:#252423;font-family:'Liberation Mono', monospace;right:2259.00px;text-align:right;transform:scaleX(0.915);transform-origin:100% 50%;">49.60</div>
<div class="t" style="top:1326.36px;font-size:26px;line-height:26px;font-weight:400;color:#252423;font-family:'Liberation Mono', monospace;right:2086.20px;text-align:right;transform:scaleX(0.915);transform-origin:100% 50%;">116.56</div>
<div class="t" style="top:1326.36px;font-size:26px;line-height:26px;font-weight:400;color:#252423;font-family:'Liberation Mono', monospace;right:1915.90px;text-align:right;transform:scaleX(0.915);transform-origin:100% 50%;">49.60</div>
<div class="t" style="top:1326.36px;font-size:26px;line-height:26px;font-weight:400;color:#252423;font-family:'Liberation Mono', monospace;right:1745.20px;text-align:right;transform:scaleX(0.915);transform-origin:100% 50%;">62.90</div>
<div class="t" style="top:1326.36px;font-size:26px;line-height:26px;font-weight:400;color:#252423;font-family:'Liberation Mono', monospace;right:1572.10px;text-align:right;transform:scaleX(0.915);transform-origin:100% 50%;">147.81</div>
<div class="t" style="top:1326.36px;font-size:26px;line-height:26px;font-weight:400;color:#252423;font-family:'Liberation Mono', monospace;right:1401.90px;text-align:right;transform:scaleX(0.915);transform-origin:100% 50%;">62.90</div>
<div class="t" style="top:1326.36px;font-size:26px;line-height:26px;font-weight:400;color:#252423;font-family:'Liberation Mono', monospace;right:887.50px;text-align:right;transform:scaleX(0.915);transform-origin:100% 50%;">11.20</div>
<div class="t" style="top:1326.36px;font-size:26px;line-height:26px;font-weight:400;color:#252423;font-family:'Liberation Mono', monospace;right:715.50px;text-align:right;transform:scaleX(0.915);transform-origin:100% 50%;">12.36</div>
<div class="t" style="top:1364.90px;font-size:24px;line-height:24px;font-weight:400;color:#252423;left:97.50px;">Machines</div>
<div class="t" style="top:1365.01px;font-size:26px;line-height:26px;font-weight:400;color:#252423;font-family:'Liberation Mono', monospace;right:2259.00px;text-align:right;transform:scaleX(0.915);transform-origin:100% 50%;">55.91</div>
<div class="t" style="top:1365.01px;font-size:26px;line-height:26px;font-weight:400;color:#252423;font-family:'Liberation Mono', monospace;right:2086.20px;text-align:right;transform:scaleX(0.915);transform-origin:100% 50%;">131.38</div>
<div class="t" style="top:1365.01px;font-size:26px;line-height:26px;font-weight:400;color:#252423;font-family:'Liberation Mono', monospace;right:1915.90px;text-align:right;transform:scaleX(0.915);transform-origin:100% 50%;">55.91</div>
<div class="t" style="top:1365.01px;font-size:26px;line-height:26px;font-weight:400;color:#252423;font-family:'Liberation Mono', monospace;right:1745.20px;text-align:right;transform:scaleX(0.915);transform-origin:100% 50%;">43.54</div>
<div class="t" style="top:1365.01px;font-size:26px;line-height:26px;font-weight:400;color:#252423;font-family:'Liberation Mono', monospace;right:1572.10px;text-align:right;transform:scaleX(0.915);transform-origin:100% 50%;">102.33</div>
<div class="t" style="top:1365.01px;font-size:26px;line-height:26px;font-weight:400;color:#252423;font-family:'Liberation Mono', monospace;right:1401.90px;text-align:right;transform:scaleX(0.915);transform-origin:100% 50%;">43.54</div>
<div class="t" style="top:1365.01px;font-size:26px;line-height:26px;font-weight:400;color:#252423;font-family:'Liberation Mono', monospace;right:1231.00px;text-align:right;transform:scaleX(0.915);transform-origin:100% 50%;">3.87</div>
<div class="t" style="top:1365.01px;font-size:26px;line-height:26px;font-weight:400;color:#252423;font-family:'Liberation Mono', monospace;right:1058.30px;text-align:right;transform:scaleX(0.915);transform-origin:100% 50%;">9.09</div>
<div class="t" style="top:1365.01px;font-size:26px;line-height:26px;font-weight:400;color:#252423;font-family:'Liberation Mono', monospace;right:887.50px;text-align:right;transform:scaleX(0.915);transform-origin:100% 50%;">7.87</div>
<div class="t" style="top:1365.01px;font-size:26px;line-height:26px;font-weight:400;color:#252423;font-family:'Liberation Mono', monospace;right:715.50px;text-align:right;transform:scaleX(0.915);transform-origin:100% 50%;">11.76</div>
<div class="t" style="top:1403.55px;font-size:24px;line-height:24px;font-weight:400;color:#252423;left:97.50px;">Phones</div>
<div class="t" style="top:1403.66px;font-size:26px;line-height:26px;font-weight:400;color:#252423;font-family:'Liberation Mono', monospace;right:2259.00px;text-align:right;transform:scaleX(0.915);transform-origin:100% 50%;">78.96</div>
<div class="t" style="top:1403.66px;font-size:26px;line-height:26px;font-weight:400;color:#252423;font-family:'Liberation Mono', monospace;right:2086.20px;text-align:right;transform:scaleX(0.915);transform-origin:100% 50%;">185.56</div>
<div class="t" style="top:1403.66px;font-size:26px;line-height:26px;font-weight:400;color:#252423;font-family:'Liberation Mono', monospace;right:1915.90px;text-align:right;transform:scaleX(0.915);transform-origin:100% 50%;">78.96</div>
<div class="t" style="top:1403.66px;font-size:26px;line-height:26px;font-weight:400;color:#252423;font-family:'Liberation Mono', monospace;right:1745.20px;text-align:right;transform:scaleX(0.915);transform-origin:100% 50%;">105.34</div>
<div class="t" style="top:1403.66px;font-size:26px;line-height:26px;font-weight:400;color:#252423;font-family:'Liberation Mono', monospace;right:1572.10px;text-align:right;transform:scaleX(0.915);transform-origin:100% 50%;">247.55</div>
<div class="t" style="top:1403.66px;font-size:26px;line-height:26px;font-weight:400;color:#252423;font-family:'Liberation Mono', monospace;right:1401.90px;text-align:right;transform:scaleX(0.915);transform-origin:100% 50%;">105.34</div>
<div class="t" style="top:1403.66px;font-size:26px;line-height:26px;font-weight:400;color:#252423;font-family:'Liberation Mono', monospace;right:1231.00px;text-align:right;transform:scaleX(0.915);transform-origin:100% 50%;">8.34</div>
<div class="t" style="top:1403.66px;font-size:26px;line-height:26px;font-weight:400;color:#252423;font-family:'Liberation Mono', monospace;right:1058.30px;text-align:right;transform:scaleX(0.915);transform-origin:100% 50%;">19.61</div>
<div class="t" style="top:1403.66px;font-size:26px;line-height:26px;font-weight:400;color:#252423;font-family:'Liberation Mono', monospace;right:887.50px;text-align:right;transform:scaleX(0.915);transform-origin:100% 50%;">8.75</div>
<div class="t" style="top:1403.66px;font-size:26px;line-height:26px;font-weight:400;color:#252423;font-family:'Liberation Mono', monospace;right:715.50px;text-align:right;transform:scaleX(0.915);transform-origin:100% 50%;">17.41</div>
<div class="r" style="left:1818.60px;top:436.00px;width:80.40px;height:53.00px;background:#ffffff;box-shadow:0 1px 4px rgba(0,0,0,0.22);"></div>
<div class="t" style="top:451.82px;font-size:27px;line-height:27px;font-weight:400;color:#3b3a39;font-family:'Liberation Mono', monospace;left:1830.50px;transform:scaleX(0.84);transform-origin:0 50%;">2024</div>
<div class="r" style="left:40.00px;top:1454.40px;width:2037.00px;height:17.10px;background:#fbfbfb;border-radius:8.5px;box-shadow:inset 0 0 0 1px #ebebeb, inset 0 -2px 2px rgba(0,0,0,0.03);"></div>
<div class="r" style="left:40.00px;top:1454.40px;width:1564.00px;height:17.10px;background:#a8a8a8;border-radius:8.5px;"></div>
<div class="r" style="left:9.50px;top:1472.30px;width:2068.50px;height:1.20px;background:#e3e3e3;"></div>
<div class="t" style="top:1486.45px;font-size:25.1px;line-height:25.1px;font-weight:400;color:#252423;left:11.00px;">Total rows: 21</div>
<div class="r" style="left:17.00px;top:1407.40px;width:29.60px;height:40.30px;background:#f4f4f4;border:1px solid #d6d6d6;box-sizing:border-box;box-shadow:0 2px 4px rgba(0,0,0,0.16);"></div>
<svg class="r" style="left:0;top:0" width="1" height="1"><rect x="26.2" y="1419.8" width="2.6" height="2.6" fill="#333"/><rect x="26.2" y="1426.3" width="2.6" height="2.6" fill="#333"/><rect x="26.2" y="1432.8" width="2.6" height="2.6" fill="#333"/><rect x="32.8" y="1419.8" width="2.6" height="2.6" fill="#333"/><rect x="32.8" y="1426.3" width="2.6" height="2.6" fill="#333"/><rect x="32.8" y="1432.8" width="2.6" height="2.6" fill="#333"/></svg>
<svg class="r" style="left:0;top:0" width="1" height="1"><path d="M1365.59 1497.59 L1365.59 1505.01 L1360.94 1504.99 L1360.06 1507.13 L1363.35 1510.41 L1358.11 1515.65 L1354.83 1512.36 L1352.69 1513.24 L1352.71 1517.89 L1345.29 1517.89 L1345.31 1513.24 L1343.17 1512.36 L1339.89 1515.65 L1334.65 1510.41 L1337.94 1507.13 L1337.06 1504.99 L1332.41 1505.01 L1332.41 1497.59 L1337.06 1497.61 L1337.94 1495.47 L1334.65 1492.19 L1339.89 1486.95 L1343.17 1490.24 L1345.31 1489.36 L1345.29 1484.71 L1352.71 1484.71 L1352.69 1489.36 L1354.83 1490.24 L1358.11 1486.95 L1363.35 1492.19 L1360.06 1495.47 L1360.94 1497.61 Z" fill="none" stroke="#3b3a39" stroke-width="1.7" stroke-linejoin="round"/><circle cx="1349" cy="1501.3" r="6.2" fill="none" stroke="#1f5bb5" stroke-width="2.2"/></svg>
<div class="r" style="left:1390.00px;top:1501.00px;width:21.00px;height:2.00px;background:#3b3a39;"></div>
<div class="r" style="left:1430.00px;top:1484.40px;width:116.40px;height:42.10px;background:#fff;border:1.5px solid #c8c8c8;box-sizing:border-box;"></div>
<div class="t" style="top:1494.38px;font-size:23px;line-height:23px;font-weight:400;color:#252423;font-family:'Liberation Mono', monospace;left:1456.00px;">100</div>
<div class="t" style="top:1492.10px;font-size:23.5px;line-height:23.5px;font-weight:400;color:#252423;left:1502.50px;">%</div>
<div class="r" style="left:1559.00px;top:1501.80px;width:22.70px;height:2.00px;background:#3b3a39;"></div>
<div class="r" style="left:1569.30px;top:1492.00px;width:2.00px;height:21.60px;background:#3b3a39;"></div>
<div class="t" style="top:1487.43px;font-size:24.3px;line-height:24.3px;font-weight:400;color:#252423;left:1641.00px;">21 records</div>
<div class="t" style="top:1487.43px;font-size:24.3px;line-height:24.3px;font-weight:400;color:#252423;left:1843.50px;">Page 1 of 1</div>
<svg class="r" style="left:0;top:0" width="1" height="1"><path d="M1784.5 1491 V1511" stroke="#a6a6a6" stroke-width="3.6"/><path d="M1804 1492 l-10 9 l10 9" fill="none" stroke="#a6a6a6" stroke-width="3.1"/><path d="M1830.5 1492 l-10 9 l10 9" fill="none" stroke="#a6a6a6" stroke-width="3.1"/><path d="M1983.5 1492 l10 9 l-10 9" fill="none" stroke="#a6a6a6" stroke-width="3.1"/><path d="M2009 1492 l10 9 l-10 9" fill="none" stroke="#a6a6a6" stroke-width="3.1"/><path d="M2029 1491 V1511" stroke="#a6a6a6" stroke-width="3.6"/></svg>
<div class="r" style="left:1350.00px;top:0.00px;width:17.00px;height:1.50px;background:#8a8a8a;"></div>
<div class="r" style="left:1350.00px;top:1534.00px;width:17.00px;height:2.00px;background:#8a8a8a;"></div>
<div class="r" style="left:0.00px;top:759.00px;width:3.50px;height:17.00px;background:#8a8a8a;"></div>
<div class="r" style="left:0.00px;top:1526.00px;width:3.50px;height:10.00px;background:#8a8a8a;"></div>
<div class="r" style="left:0.00px;top:1534.00px;width:12.00px;height:2.00px;background:#8a8a8a;"></div>
<div class="r" style="left:2070.00px;top:8.00px;width:8.00px;height:1520.40px;background:linear-gradient(90deg, rgba(0,0,0,0), rgba(0,0,0,0.04) 50%, rgba(0,0,0,0.15));"></div>
<div class="r" style="left:2078.00px;top:8.00px;width:629.50px;height:1520.40px;background:#ffffff;box-shadow:0 0 0 1px #f2f2f2;"></div>
<div class="r" style="left:2707.50px;top:0.00px;width:8.50px;height:1536.00px;background:#ffffff;"></div>
<svg class="r" style="left:0;top:0" width="1" height="1"><path d="M2606.5 6.5 H2628.5 L2619.2 16.5 V25.6 H2615.8 V16.5 Z" fill="none" stroke="#666" stroke-width="1.6" stroke-linejoin="round"/><path d="M2648.6 25.4 V8.7 H2657.5 M2668.8 18.9 V25.4 H2648.6 M2648.6 19.5 H2657.5 V25.4 M2660.6 16.3 L2668.4 8.6 M2662.8 8.6 H2668.5 V14.3" fill="none" stroke="#666" stroke-width="1.6"/><circle cx="2690.4" cy="14.8" r="2" fill="#666"/><circle cx="2699.5" cy="14.8" r="2" fill="#666"/><circle cx="2708.6" cy="14.8" r="2" fill="#666"/></svg>
<svg class="r" style="left:0;top:0" width="1" height="1"><path d="M2132.5 66.3 L2118.5 79 L2132.5 91.7" fill="none" stroke="#252423" stroke-width="1.8"/><circle cx="2356.7" cy="75.5" r="11.6" fill="none" stroke="#252423" stroke-width="1.6"/><path d="M2356.7 72 V83" stroke="#252423" stroke-width="2"/><circle cx="2356.7" cy="68.2" r="1.3" fill="#252423"/><path d="M2662.3 72.2 L2685.6 95.5 M2685.6 72.2 L2662.3 95.5" stroke="#252423" stroke-width="2.2"/></svg>
<div class="t" style="top:56.02px;font-size:42.5px;line-height:42.5px;font-weight:400;color:#2d2c2b;left:2176.00px;transform:scaleX(0.94);transform-origin:0 50%;">Forecast</div>
<div class="r" style="left:2078.00px;top:127.20px;width:629.50px;height:1.20px;background:#f7f7f7;"></div>
<div class="t" style="top:149.01px;font-size:26.8px;line-height:26.8px;font-weight:400;color:#605e5c;left:2108.00px;-webkit-text-stroke:0.35px currentColor;">General</div>
<div class="t" style="top:149.77px;font-size:25.9px;line-height:25.9px;font-weight:400;color:#252423;left:2255.00px;-webkit-text-stroke:0.35px currentColor;">Forecast</div>
<div class="r" style="left:2255.00px;top:184.60px;width:103.00px;height:4.60px;background:#0078d4;"></div>
<div class="r" style="left:2375.50px;top:186.80px;width:9.00px;height:2.40px;background:#e81123;border-radius:5px 5px 0 0;"></div>
<div class="r" style="left:2078.00px;top:189.00px;width:629.50px;height:1202.00px;background:#f4f4f4;"></div>
<div class="r" style="left:2692.00px;top:190.00px;width:16.00px;height:1201.00px;background:#fbfbfb;border-radius:8px;box-shadow:inset 0 0 0 1px #ececec;"></div>
<div class="r" style="left:2692.30px;top:455.70px;width:15.20px;height:935.30px;background:linear-gradient(90deg,#b4b4b4,#a6a6a6 40%,#bcbcbc);border-radius:8px;"></div>
<div class="t" style="top:227.69px;font-size:24.7px;line-height:24.7px;font-weight:400;color:#252423;left:2112.50px;-webkit-text-stroke:0.35px currentColor;">Linked Actuals Measure</div>
<div class="r" style="left:2113.00px;top:271.00px;width:544.50px;height:63.00px;background:#fff;border:1px solid #e1e1e1;box-sizing:border-box;"></div>
<div class="t" style="top:291.65px;font-size:23.8px;line-height:23.8px;font-weight:400;color:#252423;left:2135.00px;">Sum of Sales</div>
<div class="r" style="left:2113.00px;top:368.00px;width:544.50px;height:2.00px;background:#dcdcdc;"></div>
<div class="t" style="top:400.23px;font-size:24.3px;line-height:24.3px;font-weight:400;color:#252423;left:2112.50px;-webkit-text-stroke:0.35px currentColor;">Closed Period Values</div>
<div class="r" style="left:2113.00px;top:439.50px;width:544.50px;height:289.00px;background:#fff;border:1px solid #e1e1e1;box-sizing:border-box;"></div>
<div class="t" style="top:462.35px;font-size:25.1px;line-height:25.1px;font-weight:400;color:#252423;left:2137.00px;-webkit-text-stroke:0.35px currentColor;">Display Values from</div>
<div class="r" style="left:2138.00px;top:507.00px;width:495.50px;height:63.50px;background:#fff;border:1.5px solid #dedede;box-sizing:border-box;"></div>
<div class="t" style="top:527.55px;font-size:23.8px;line-height:23.8px;font-weight:400;color:#252423;left:2160.00px;">Forecast</div>
<div class="t" style="top:594.18px;font-size:25.3px;line-height:25.3px;font-weight:400;color:#252423;left:2137.00px;-webkit-text-stroke:0.35px currentColor;">Aggregate Grand Total from</div>
<div class="r" style="left:2138.00px;top:639.00px;width:495.50px;height:63.80px;background:#fff;border:1.5px solid #dedede;box-sizing:border-box;"></div>
<div class="t" style="top:659.69px;font-size:24.7px;line-height:24.7px;font-weight:400;color:#252423;left:2160.00px;">All Periods</div>
<svg class="r" style="left:0;top:0" width="1" height="1"><path d="M2609.5 295.8 L2622.1 309.0 L2634.7 295.8" fill="none" stroke="#323130" stroke-width="1.6"/><path d="M2585 531.3 L2597.6 544.5 L2610.2 531.3" fill="none" stroke="#323130" stroke-width="1.6"/><path d="M2585 663.6 L2597.6 676.8000000000001 L2610.2 663.6" fill="none" stroke="#323130" stroke-width="1.6"/></svg>
<div class="t" style="top:767.00px;font-size:24.8px;line-height:24.8px;font-weight:400;color:#252423;left:2112.50px;-webkit-text-stroke:0.35px currentColor;">Auto Close Settings</div>
<div class="r" style="left:2113.50px;top:819.60px;width:544.00px;height:511.90px;background:#fff;border:1px solid #e1e1e1;box-sizing:border-box;"></div>
<div class="t" style="top:849.09px;font-size:24.7px;line-height:24.7px;font-weight:400;color:#252423;left:2139.00px;-webkit-text-stroke:0.35px currentColor;">Close Period on</div>
<div class="r" style="left:2122.50px;top:877.50px;width:519.00px;height:92.00px;border:2.6px solid #e3141f;box-sizing:border-box;border-radius:5px;box-shadow:0 1px 3px rgba(0,0,0,0.18);"></div>
<svg class="r" style="left:0;top:0" width="1" height="1"><circle cx="2156.4" cy="934.6" r="16.2" fill="#fff" stroke="#0078d4" stroke-width="1.6"/><circle cx="2156.4" cy="934.6" r="9.8" fill="#0078d4"/><circle cx="2156.4" cy="1021.4" r="16.2" fill="#f3f3f3" stroke="#a6a6a6" stroke-width="1.5"/><circle cx="2156.4" cy="1104.2" r="16.2" fill="#f3f3f3" stroke="#a6a6a6" stroke-width="1.5"/><circle cx="2156.4" cy="1188.6" r="16.2" fill="#f3f3f3" stroke="#a6a6a6" stroke-width="1.5"/></svg>
<div class="t" style="top:904.56px;font-size:23.2px;line-height:23.2px;font-weight:400;color:#323130;left:2204.00px;"><span style="font-family:'Liberation Mono',monospace;letter-spacing:-0.5px">10</span><span style="letter-spacing:1px">th</span> work day of next month (Workspace</div>
<div class="t" style="top:939.60px;font-size:23.5px;line-height:23.5px;font-weight:400;color:#323130;left:2203.50px;">settings)</div>
<div class="r" style="left:2204.00px;top:998.00px;width:50.80px;height:41.50px;background:#fff;border:1.5px solid #e0e0e0;box-sizing:border-box;"></div>
<div class="t" style="top:1009.53px;font-size:23px;line-height:23px;font-weight:400;color:#c8c8c8;left:1629.40px;width:1200px;text-align:center;">6</div>
<div class="t" style="top:1008.79px;font-size:23.4px;line-height:23.4px;font-weight:400;color:#323130;left:2265.00px;">Calendar day of the next month</div>
<div class="r" style="left:2204.00px;top:1082.00px;width:50.80px;height:42.50px;background:#fff;border:1.5px solid #e0e0e0;box-sizing:border-box;"></div>
<div class="t" style="top:1091.99px;font-size:23.4px;line-height:23.4px;font-weight:400;color:#323130;left:2265.00px;">Workday of the next month</div>
<div class="t" style="top:1178.03px;font-size:23px;line-height:23px;font-weight:400;color:#323130;left:2203.50px;">Disabled</div>
<div class="r" style="left:2139.60px;top:1249.00px;width:34.40px;height:33.50px;background:#fff;border:1.6px solid #323130;box-sizing:border-box;"></div>
<div class="t" style="top:1253.24px;font-size:25.7px;line-height:25.7px;font-weight:400;color:#323130;left:2191.00px;">Auto-extend period range by 1 month</div>
<div class="r" style="left:2318.00px;top:1421.00px;width:171.00px;height:77.50px;background:#f4f4f4;"></div>
<div class="t" style="top:1447.36px;font-size:26.5px;line-height:26.5px;font-weight:400;color:#252423;left:1803.50px;width:1200px;text-align:center;-webkit-text-stroke:0.35px currentColor;">Cancel</div>
<div class="r" style="left:2506.00px;top:1421.00px;width:172.00px;height:77.50px;background:#0078d4;"></div>
<div class="t" style="top:1447.36px;font-size:26.5px;line-height:26.5px;font-weight:400;color:#ffffff;left:1992.50px;width:1200px;text-align:center;-webkit-text-stroke:0.7px #fff;">Update</div>
<div class="r" style="left:2704.00px;top:1534.00px;width:12.00px;height:2.00px;background:#8a8a8a;"></div>
<div class="r" style="left:2713.50px;top:1525.00px;width:2.50px;height:11.00px;background:#8a8a8a;"></div>
<div class="r" style="left:2713.50px;top:759.00px;width:2.50px;height:17.00px;background:#8a8a8a;"></div>
</body></html>
